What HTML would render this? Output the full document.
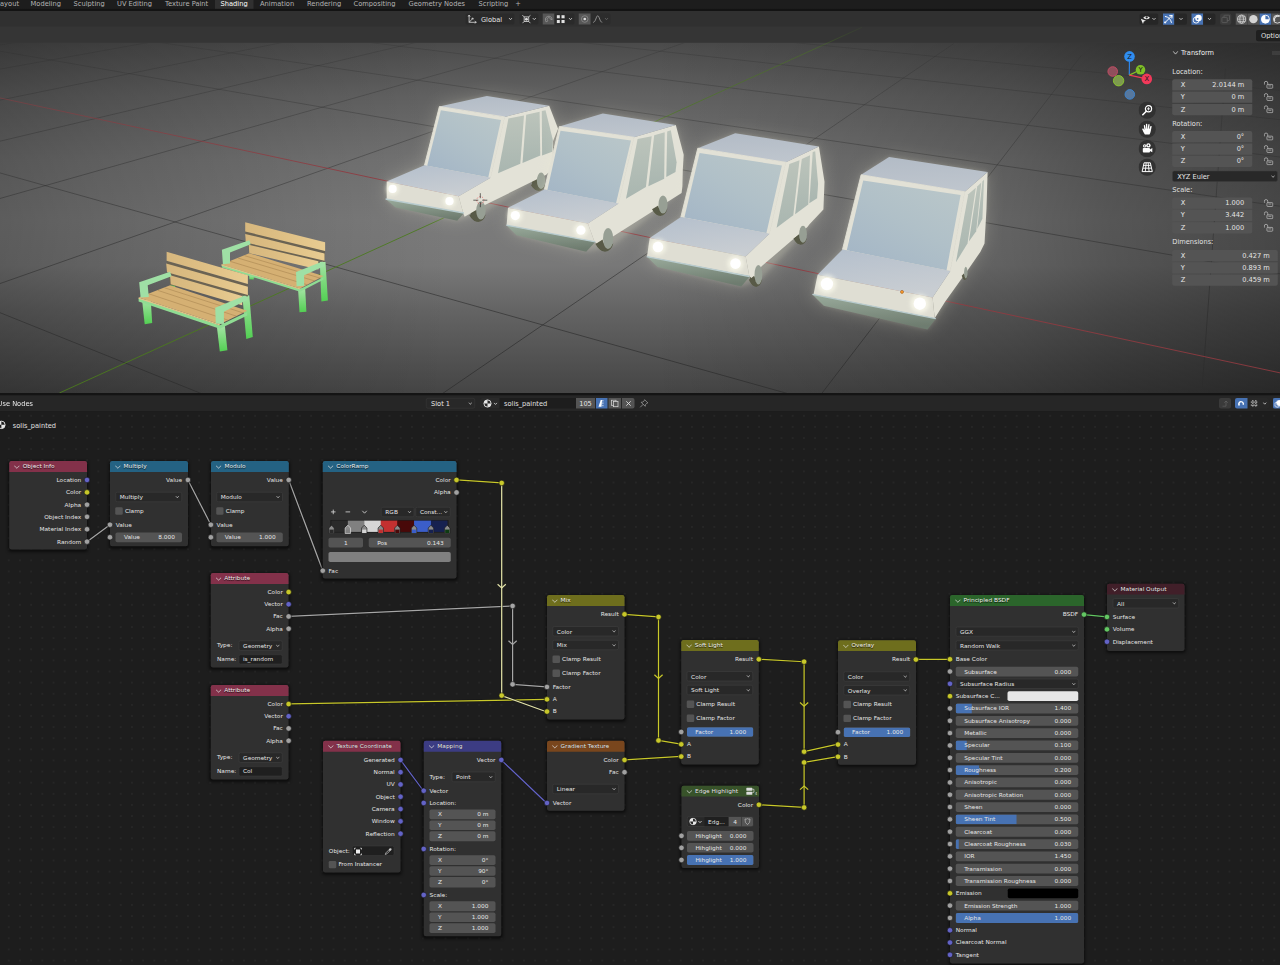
<!DOCTYPE html><html><head><meta charset="utf-8"><title>Blender</title><style>
#sc{position:absolute;left:0;top:0;width:5120px;height:3860px;transform:scale(.25);transform-origin:0 0}
#root{position:absolute;left:0;top:0;width:5120px;height:3860px}
html,body{width:1280px;height:965px;overflow:hidden;background:#1d1d1d;font-family:"DejaVu Sans","Liberation Sans",sans-serif;color:#e0e0e0}

*{box-sizing:border-box;margin:0;padding:0}
.abs{position:absolute}
#top{position:absolute;left:0;top:0;width:5120px;height:44px;z-index:5;background:linear-gradient(#1d1d1d 0,#1d1d1d 33.6px,#131313 36px,#131313 42.4px,#303030 44px);font-size:26.8px;line-height:32px;white-space:nowrap;overflow:hidden}
#top span{position:absolute;top:-1.2px;color:#b4b4b4}
#top .act{color:#fff}
#vp{position:absolute;left:0;top:40px;width:5120px;height:1532px;overflow:hidden;background:#353535}
#vphead{position:absolute;left:0;top:0;width:5120px;height:66px;background:#303030}
.ui{font-size:26.6px;line-height:40px;white-space:nowrap;color:#e4e4e4}
.fld{position:absolute;background:#545454;border-radius:8px;font-size:26.6px;line-height:41.6px;color:#e6e6e6;white-space:nowrap}
.fld i{font-style:normal;position:absolute;left:34px;top:0}
.fld b{font-weight:normal;position:absolute;right:32px;top:0}
.lbl{position:absolute;font-size:26.6px;line-height:36px;color:#e0e0e0;white-space:nowrap}
.dd{position:absolute;background:#282828;border:2px solid #3d3d3d;border-radius:8px;font-size:26.6px;line-height:40px;color:#e6e6e6;white-space:nowrap;padding-left:18px}
#sep{position:absolute;left:0;top:1572px;width:5120px;height:10.4px;background:#141414}
#nh{position:absolute;left:0;top:1582px;width:5120px;height:63.2px;background:#262626}
#ne{position:absolute;left:0;top:1645.2px;width:5120px;height:2214.8px;background-color:#1d1d1d;background-image:radial-gradient(circle,#262626 2.8px,transparent 3.6px);background-size:44.8px 44.48px;background-position:12.6px -4px;overflow:hidden}
.node{position:absolute;background:#303030;border-radius:8.8px;box-shadow:0 4px 12px 4px rgba(0,0,0,.55);font-size:23.4px;color:#e6e6e6;white-space:nowrap}
.nh{position:absolute;left:0;top:0;right:0;height:43.6px;border-radius:8.8px 8.8px 0 0;line-height:41.6px;padding-left:54px;text-shadow:0 2px 3.2px rgba(0,0,0,.8);color:#f0f0f0}
.nh:before{content:"";position:absolute;left:23.6px;top:12.4px;width:12.8px;height:12.8px;border-right:2.8px solid #dcdcdc;border-bottom:2.8px solid #dcdcdc;transform:rotate(45deg) scale(1,1);transform-origin:center}
.so{position:absolute;right:23.2px;line-height:32px;height:32px;margin-top:-17.2px;text-align:right}
.si{position:absolute;left:22.8px;line-height:32px;height:32px;margin-top:-17.2px}
.sk{position:absolute;width:21.6px;height:21.6px;border-radius:50%;border:2.4px solid #1a1a1a;margin:-10.8px 0 0 -10.8px}
.g{background:#a1a1a1}.y{background:#c7c729}.p{background:#6363c7}.gr{background:#63c763}
.nd{position:absolute;background:#282828;border:2px solid #424242;border-radius:7.2px;line-height:34.4px;padding-left:15.2px;color:#e6e6e6}
.nd:after,.dd:after{content:"";position:absolute;right:11.6px;top:50%;width:8.4px;height:8.4px;margin-top:-7.6px;border-right:2.8px solid #ddd;border-bottom:2.8px solid #ddd;transform:rotate(45deg)}
.nf{position:absolute;background:#545454;border-radius:7.2px;line-height:37.6px;color:#e6e6e6;overflow:hidden}
.nf i{font-style:normal;position:absolute;left:33.6px;top:0;z-index:1}
.nf b{font-weight:normal;position:absolute;right:28px;top:0;z-index:1}
.nf u{position:absolute;left:0;top:0;bottom:0;background:#4772b3}
.nf.c{text-align:center}
.cb{position:absolute;width:29.6px;height:29.6px;background:#545454;border-radius:5.2px}
.cl{position:absolute;line-height:32px;height:32px;margin-top:-17.2px}
.tf{position:absolute;background:#1f1f1f;border:2px solid #3d3d3d;border-radius:7.2px;line-height:35.2px;padding-left:14.4px}
</style></head><body><div id="sc"><div id="root">
<div id="top">
<div class="abs" style="left:860px;top:0;width:154px;height:35.2px;background:#303030;border-radius:0 0 0 0"></div>
<span style="left:0px">ayout</span>
<span style="left:122px">Modeling</span>
<span style="left:294px">Sculpting</span>
<span style="left:468px">UV Editing</span>
<span style="left:660px">Texture Paint</span>
<span style="left:882px" class=act>Shading</span>
<span style="left:1040px">Animation</span>
<span style="left:1228px">Rendering</span>
<span style="left:1414px">Compositing</span>
<span style="left:1634px">Geometry Nodes</span>
<span style="left:1914px">Scripting</span>
<span style="left:2060.8px">+</span>
</div>
<div id="vp">
<svg class="abs" style="left:0;top:0" width="5120" height="1532" viewBox="0 0 1280 383">
<defs>
<linearGradient id="flr" gradientUnits="userSpaceOnUse" x1="0" y1="33" x2="0" y2="383"><stop offset="0.000" stop-color="#4b4b4b"/><stop offset="0.149" stop-color="#616161"/><stop offset="0.334" stop-color="#737373"/><stop offset="0.506" stop-color="#7b7b7b"/><stop offset="0.634" stop-color="#787878"/><stop offset="0.763" stop-color="#646464"/><stop offset="0.863" stop-color="#575757"/><stop offset="1.000" stop-color="#454545"/></linearGradient>
<linearGradient id="gl" gradientUnits="userSpaceOnUse" x1="0" y1="33" x2="0" y2="383"><stop offset="0" stop-color="#2c2c2c" stop-opacity="0.3"/><stop offset="0.5" stop-color="#2c2c2c" stop-opacity="0.6"/><stop offset="1" stop-color="#2c2c2c" stop-opacity="0.85"/></linearGradient>
<linearGradient id="gax" gradientUnits="userSpaceOnUse" x1="59" y1="383" x2="862" y2="17"><stop offset="0" stop-color="#4a7a1c"/><stop offset="0.6" stop-color="#4a7a1c" stop-opacity="0.95"/><stop offset="0.94" stop-color="#4a7a1c" stop-opacity="0.5"/><stop offset="1" stop-color="#4a7a1c" stop-opacity="0.1"/></linearGradient>
<linearGradient id="rax" gradientUnits="userSpaceOnUse" x1="0" y1="0" x2="1280" y2="0"><stop offset="0" stop-color="#8f3a40" stop-opacity="0.55"/><stop offset="0.3" stop-color="#8f3a40"/><stop offset="1" stop-color="#8f3a40"/></linearGradient>
<linearGradient id="flh" gradientUnits="userSpaceOnUse" x1="0" y1="0" x2="1280" y2="0"><stop offset="0.000" stop-color="#000" stop-opacity="0.25"/><stop offset="0.078" stop-color="#000" stop-opacity="0.18"/><stop offset="0.234" stop-color="#000" stop-opacity="0.07"/><stop offset="0.352" stop-color="#000" stop-opacity="0"/><stop offset="0.508" stop-color="#000" stop-opacity="0"/><stop offset="0.664" stop-color="#000" stop-opacity="0.1"/><stop offset="0.789" stop-color="#000" stop-opacity="0.2"/><stop offset="0.867" stop-color="#000" stop-opacity="0.3"/><stop offset="1.000" stop-color="#000" stop-opacity="0.42"/></linearGradient>
<linearGradient id="ws" x1="0.9" y1="0" x2="0.2" y2="1"><stop offset="0" stop-color="#bac7c9"/><stop offset="0.5" stop-color="#b0c0c8"/><stop offset="1" stop-color="#a4b6c6"/></linearGradient>
<linearGradient id="hood" x1="0" y1="0" x2="0.4" y2="1"><stop offset="0" stop-color="#b4bfcc"/><stop offset="1" stop-color="#c8cdd2"/></linearGradient>
<linearGradient id="roof" x1="0" y1="0" x2="0.2" y2="1"><stop offset="0" stop-color="#b2bbc6"/><stop offset="1" stop-color="#bec5cd"/></linearGradient>
<linearGradient id="sw" x1="0" y1="0" x2="0" y2="1"><stop offset="0" stop-color="#bcc4bb"/><stop offset="1" stop-color="#a9b6b0"/></linearGradient>
<linearGradient id="bump" x1="0" y1="0" x2="0.15" y2="1"><stop offset="0" stop-color="#9aab9c"/><stop offset="1" stop-color="#6e7c6f"/></linearGradient>
<linearGradient id="legg" x1="0" y1="0" x2="0" y2="1"><stop offset="0" stop-color="#a5e3a5"/><stop offset="1" stop-color="#52cf52"/></linearGradient>
<linearGradient id="wood" x1="0" y1="0" x2="1" y2="0"><stop offset="0" stop-color="#d6b77e"/><stop offset="0.5" stop-color="#dfc085"/><stop offset="1" stop-color="#e8cc92"/></linearGradient>
<filter id="bl6" x="-40%" y="-40%" width="180%" height="180%"><feGaussianBlur stdDeviation="9"/></filter>
<filter id="bl2" x="-50%" y="-50%" width="200%" height="200%"><feGaussianBlur stdDeviation="2.2"/></filter>
<filter id="bl1" x="-50%" y="-50%" width="200%" height="200%"><feGaussianBlur stdDeviation="0.5"/></filter>
<filter id="blb" x="-30%" y="-30%" width="160%" height="160%"><feGaussianBlur stdDeviation="2"/></filter>
</defs>
<rect x="0" y="0" width="1280" height="383" fill="#353535"/>
<rect x="0" y="32.8" width="1280" height="351" fill="url(#flr)"/><rect x="0" y="32.8" width="1280" height="351" fill="url(#flh)"/>
<g clip-path="url(#fc)"><clipPath id="fc"><rect x="0" y="33" width="1280" height="350"/></clipPath>
<line x1="-1073.3" y1="61.4" x2="57.3" y2="-48.4" stroke="url(#gl)" stroke-width="0.85" opacity="1"/>
<line x1="-1068.2" y1="76.4" x2="98.2" y2="-44.7" stroke="url(#gl)" stroke-width="0.85" opacity="1"/>
<line x1="-1062.3" y1="93.7" x2="142.0" y2="-40.7" stroke="url(#gl)" stroke-width="0.85" opacity="1"/>
<line x1="-1055.5" y1="113.8" x2="188.9" y2="-36.4" stroke="url(#gl)" stroke-width="0.85" opacity="1"/>
<line x1="-1047.4" y1="137.3" x2="239.4" y2="-31.8" stroke="url(#gl)" stroke-width="0.85" opacity="1"/>
<line x1="-1037.9" y1="165.2" x2="293.9" y2="-26.8" stroke="url(#gl)" stroke-width="0.85" opacity="1"/>
<line x1="-1026.4" y1="199.0" x2="352.8" y2="-21.4" stroke="url(#gl)" stroke-width="0.85" opacity="1"/>
<line x1="-1012.3" y1="240.6" x2="416.7" y2="-15.6" stroke="url(#gl)" stroke-width="0.85" opacity="1"/>
<line x1="-994.4" y1="293.2" x2="486.3" y2="-9.2" stroke="url(#gl)" stroke-width="0.85" opacity="1"/>
<line x1="-971.0" y1="361.7" x2="562.4" y2="-2.3" stroke="url(#gl)" stroke-width="0.85" opacity="1"/>
<line x1="-939.4" y1="454.7" x2="646.0" y2="5.4" stroke="url(#gl)" stroke-width="0.85" opacity="1"/>
<line x1="-893.9" y1="588.2" x2="738.1" y2="13.8" stroke="url(#gl)" stroke-width="0.85" opacity="1"/>
<line x1="-697.8" y1="1164.1" x2="953.9" y2="33.5" stroke="url(#gl)" stroke-width="0.85" opacity="1"/>
<line x1="-415.2" y1="1994.2" x2="1081.5" y2="45.2" stroke="url(#gl)" stroke-width="0.85" opacity="1"/>
<line x1="1027.0" y1="2776.9" x2="1225.5" y2="58.4" stroke="url(#gl)" stroke-width="0.85" opacity="1"/>
<line x1="3073.5" y1="2772.8" x2="1389.5" y2="73.4" stroke="url(#gl)" stroke-width="0.85" opacity="1"/>
<line x1="5120.0" y1="2768.7" x2="1577.7" y2="90.6" stroke="url(#gl)" stroke-width="0.85" opacity="1"/>
<line x1="7166.4" y1="2764.5" x2="1796.2" y2="110.5" stroke="url(#gl)" stroke-width="0.85" opacity="1"/>
<line x1="-1081.8" y1="36.4" x2="-147.9" y2="2779.3" stroke="url(#gl)" stroke-width="0.85" opacity="1"/>
<line x1="-895.4" y1="20.3" x2="2992.5" y2="2773.0" stroke="url(#gl)" stroke-width="0.85" opacity="1"/>
<line x1="-736.7" y1="6.7" x2="6132.8" y2="2766.6" stroke="url(#gl)" stroke-width="0.85" opacity="1"/>
<line x1="-599.9" y1="-5.1" x2="9273.2" y2="2760.3" stroke="url(#gl)" stroke-width="0.85" opacity="1"/>
<line x1="-376.2" y1="-24.3" x2="4823.4" y2="880.4" stroke="url(#gl)" stroke-width="0.85" opacity="1"/>
<line x1="-283.6" y1="-32.3" x2="3678.6" y2="546.8" stroke="url(#gl)" stroke-width="0.85" opacity="1"/>
<line x1="-201.0" y1="-39.4" x2="3088.3" y2="374.7" stroke="url(#gl)" stroke-width="0.85" opacity="1"/>
<line x1="-126.9" y1="-45.8" x2="2728.3" y2="269.8" stroke="url(#gl)" stroke-width="0.85" opacity="1"/>
<line x1="-60.0" y1="-51.5" x2="2485.7" y2="199.1" stroke="url(#gl)" stroke-width="0.85" opacity="1"/>
<line x1="-480.8" y1="-15.3" x2="7997.1" y2="1805.4" stroke="url(#rax)" stroke-width="0.9" opacity="1"/>
</g>
<line x1="59.4" y1="383" x2="862" y2="17.3" stroke="url(#gax)" stroke-width="0.9"/>
<g filter="url(#bl1)">
<polygon points="138.6,287.5 166.6,241.8 247.9,265.2 252.3,328.1 221.9,341.3 143.7,313.9" fill="#e8e0a0" opacity="0" filter="url(#blb)"/>
<polygon points="221.3,254.6 245.2,212.3 325.1,232.3 327.9,290.5 300.1,302.3" fill="#e8e0a0" opacity="0" filter="url(#blb)"/>
<polygon points="298.0,278.4 305.2,278.4 306.4,301.7 299.5,302.3" fill="url(#legg)" />
<polygon points="319.8,252.0 325.5,252.0 327.9,290.5 321.4,291.6" fill="url(#legg)" />
<polygon points="249.3,265.2 253.8,265.6 253.8,269.6 249.3,269.2" fill="url(#legg)" />
<polygon points="221.9,254.6 300.1,279.0 300.1,281.8 221.9,257.4" fill="#8fdc93" />
<polygon points="300.1,279.0 323.4,267.2 323.4,269.8 300.1,281.8" fill="#8fdc93" />
<polygon points="221.3,254.6 249.3,243.2 323.4,266.0 300.1,278.4" fill="#d5b073" />
<polyline points="230.0,251.3 307.6,274.9" fill="none" stroke="#a98652" stroke-width="0.6"/>
<polyline points="238.1,248.1 314.9,271.0" fill="none" stroke="#a98652" stroke-width="0.6"/>
<polyline points="244.6,245.7 320.4,268.2" fill="none" stroke="#a98652" stroke-width="0.6"/>
<polygon points="221.3,254.6 300.1,278.4 300.1,279.4 221.3,255.6" fill="#e4c48a" />
<polygon points="245.2,220.5 325.1,240.8 324.5,252.0 249.3,243.2" fill="#6b6353" />
<polygon points="245.2,212.3 325.1,232.3 325.1,241.0 245.2,221.5" fill="url(#wood)" />
<polygon points="245.2,223.9 324.5,243.4 324.5,250.7 245.8,232.5" fill="url(#wood)" />
<polygon points="248.7,234.7 318.4,251.3 318.4,259.5 249.3,243.2" fill="url(#wood)" />
<polygon points="221.9,239.8 249.3,230.2 250.7,234.3 230.0,242.4 230.0,253.4 222.9,254.2" fill="#9fe0a5" />
<polygon points="296.0,262.1 322.4,251.5 324.5,256.0 304.1,265.2 304.1,275.7 296.6,276.3" fill="#9fe0a5" />
<polygon points="142.0,289.5 150.8,290.5 152.2,312.9 144.7,314.3" fill="url(#legg)" />
<polygon points="216.8,315.9 224.9,315.9 227.4,340.3 219.8,341.5" fill="url(#legg)" />
<polygon points="242.2,284.5 249.3,285.5 252.8,327.1 246.3,329.1" fill="url(#legg)" />
<polygon points="170.1,267.2 174.1,267.2 175.2,277.3 170.1,277.3" fill="url(#legg)" />
<polygon points="138.6,287.9 219.8,315.3 219.8,318.8 138.6,291.4" fill="#8fdc93" />
<polygon points="219.8,315.3 247.3,302.1 247.3,305.4 219.8,318.8" fill="#8fdc93" />
<polygon points="138.6,287.5 170.1,275.3 247.3,300.7 219.8,314.3" fill="#d5b073" />
<polyline points="148.8,283.8 228.4,310.3" fill="none" stroke="#a98652" stroke-width="0.6"/>
<polyline points="157.9,280.4 236.5,306.2" fill="none" stroke="#a98652" stroke-width="0.6"/>
<polyline points="164.6,277.8 243.2,302.9" fill="none" stroke="#a98652" stroke-width="0.6"/>
<polygon points="138.6,287.5 219.8,314.3 219.8,315.5 138.6,288.7" fill="#e4c48a" />
<polygon points="166.6,250.9 247.9,274.3 247.9,286.5 170.1,275.3" fill="#6b6353" />
<polygon points="166.6,241.8 247.9,265.2 247.9,274.1 166.6,250.7" fill="url(#wood)" />
<polygon points="166.2,253.4 247.9,276.7 247.9,285.1 167.0,262.3" fill="url(#wood)" />
<polygon points="170.1,265.2 242.2,285.9 242.2,295.2 170.7,274.3" fill="url(#wood)" />
<polygon points="139.2,272.3 170.1,261.7 171.5,266.2 147.7,275.3 148.8,287.1 140.6,287.5" fill="#9fe0a5" />
<polygon points="215.2,297.7 245.2,285.5 247.7,289.5 223.9,301.7 223.9,313.9 215.8,313.5" fill="#9fe0a5" />
</g>
<polygon points="439.4,96.5 486.9,86.1 549.2,95.8 558.1,118.8 552.9,158.1 483.9,202.7 457.2,210.8 395.6,197.5 385.6,189.0 386.7,171.5 424.5,155.2" fill="#f0eed4" opacity="0.22" filter="url(#bl6)"/>
<polygon points="439.4,96.5 486.9,86.1 549.2,95.8 558.1,118.8 552.9,158.1 483.9,202.7 457.2,210.8 395.6,197.5 385.6,189.0 386.7,171.5 424.5,155.2" fill="#f6f4dc" opacity="0.16" filter="url(#blb)"/>
<g filter="url(#bl1)">
<ellipse cx="537.1" cy="172.0" rx="5.2" ry="8.3" fill="#585a46"/>
<ellipse cx="476.4" cy="201.9" rx="5.9" ry="9.4" fill="#585a46"/>
<polygon points="385.6,189.0 463.9,203.0 457.2,210.8 395.6,197.5" fill="url(#bump)"/>
<polygon points="504.7,106.9 549.2,95.8 558.1,118.8 552.9,131.4 552.9,158.1 546.2,164.8 483.9,195.5 464.6,206.8 463.1,202.7 458.7,186.3 490.6,167.8" fill="#e3e2d7"/>
<polygon points="508.4,108.4 524.0,105.4 520.3,153.7 498.0,163.3" fill="url(#sw)"/>
<polygon points="526.2,104.7 539.6,101.7 540.3,145.5 522.5,152.9" fill="url(#sw)"/>
<polygon points="541.8,101.0 545.5,100.2 552.9,129.9 552.2,141.8 542.1,145.5" fill="url(#sw)"/>
<polygon points="439.4,96.5 486.9,86.1 549.2,95.8 504.7,106.9" fill="url(#roof)"/>
<polygon points="439.4,96.5 504.7,106.9 490.6,167.8 424.5,155.2" fill="#e2e1d6" stroke="#e2e1d6" stroke-width="0.9" stroke-linejoin="round"/>
<polygon points="440.9,100.2 501.0,109.9 488.3,167.3 427.2,155.7" fill="url(#ws)"/>
<polygon points="424.5,155.2 490.6,167.8 458.7,186.3 386.7,171.5" fill="url(#hood)"/>
<polygon points="386.7,171.5 458.7,186.3 463.1,202.7 386.7,189.3" fill="#dfded3"/>
<polyline points="385.6,189.0 463.9,203.0" fill="none" stroke="#b9cccf" stroke-width="1.3"/>
<path d="M540.2 178.9A4.6 8.6 0 0 1 536.7 171.6L530.9 175.0Q533.6 180.1 538.6 181.0Q543.8 180.5 545.2 174.4z" fill="#585a46"/>
<ellipse cx="541.1" cy="170.7" rx="4.2" ry="8.2" fill="#979f94"/>
<path d="M480.0 209.6A5.2 9.7 0 0 1 475.9 201.3L469.3 205.2Q472.4 211.0 478.1 212.0Q484.0 211.5 485.7 204.6z" fill="#585a46"/>
<ellipse cx="480.9" cy="200.4" rx="4.7" ry="9.2" fill="#979f94"/>
</g>
<circle cx="392.6" cy="178.9" r="6.1" fill="#fffef0" opacity="0.7" filter="url(#bl2)"/>
<circle cx="392.6" cy="178.9" r="4.1" fill="#ffffff" filter="url(#bl1)"/>
<circle cx="449.5" cy="191.2" r="6.1" fill="#fffef0" opacity="0.7" filter="url(#bl2)"/>
<circle cx="449.5" cy="191.2" r="4.1" fill="#ffffff" filter="url(#bl1)"/>
<polygon points="559.4,116.5 602.8,103.6 675.8,114.9 683.7,144.7 682.4,176.2 672.5,188.7 612.8,235.9 586.2,241.7 516.6,225.2 506.3,215.2 508.0,197.8 544.4,179.6" fill="#f0eed4" opacity="0.22" filter="url(#bl6)"/>
<polygon points="559.4,116.5 602.8,103.6 675.8,114.9 683.7,144.7 682.4,176.2 672.5,188.7 612.8,235.9 586.2,241.7 516.6,225.2 506.3,215.2 508.0,197.8 544.4,179.6" fill="#f6f4dc" opacity="0.16" filter="url(#blb)"/>
<g filter="url(#bl1)">
<ellipse cx="658.8" cy="195.9" rx="5.6" ry="9.3" fill="#585a46"/>
<ellipse cx="603.2" cy="230.2" rx="6.4" ry="10.8" fill="#585a46"/>
<polygon points="506.3,215.2 595.4,231.8 586.2,241.7 516.6,225.2" fill="url(#bump)"/>
<polygon points="634.0,127.3 675.8,114.9 683.7,144.7 682.8,159.7 682.4,176.2 681.6,182.9 672.5,188.7 599.5,235.1 594.5,231.8 587.9,213.5 618.6,193.6" fill="#e3e2d7"/>
<polygon points="637.6,129.0 651.7,126.2 645.9,177.1 626.0,188.7" fill="url(#sw)"/>
<polygon points="654.2,125.2 664.7,122.3 664.2,168.8 648.4,176.2" fill="url(#sw)"/>
<polygon points="667.2,121.5 670.8,120.2 676.6,152.2 675.5,162.1 666.3,167.1" fill="url(#sw)"/>
<polygon points="559.4,116.5 602.8,103.6 675.8,114.9 634.0,127.3" fill="url(#roof)"/>
<polygon points="559.4,116.5 634.0,127.3 618.6,193.6 544.4,179.6" fill="#e2e1d6" stroke="#e2e1d6" stroke-width="0.9" stroke-linejoin="round"/>
<polygon points="560.5,120.7 631.0,130.6 616.0,193.2 547.4,180.1" fill="url(#ws)"/>
<polygon points="544.4,179.6 618.6,193.6 587.9,213.5 508.0,197.8" fill="url(#hood)"/>
<polygon points="508.0,197.8 587.9,213.5 594.5,231.8 506.6,215.2" fill="#dfded3"/>
<polyline points="506.3,215.2 595.4,231.8" fill="none" stroke="#b9cccf" stroke-width="1.3"/>
<path d="M662.1 203.6A4.9 9.6 0 0 1 658.3 195.4L652.0 199.2Q655.0 205.0 660.3 206.0Q665.9 205.4 667.5 198.6z" fill="#585a46"/>
<ellipse cx="663.0" cy="194.5" rx="4.5" ry="9.1" fill="#979f94"/>
<path d="M607.1 239.1A5.7 11.1 0 0 1 602.7 229.5L595.5 234.0Q598.9 240.7 605.0 241.8Q611.5 241.2 613.3 233.3z" fill="#585a46"/>
<ellipse cx="608.1" cy="228.5" rx="5.1" ry="10.6" fill="#979f94"/>
</g>
<circle cx="515.3" cy="205.6" r="6.9" fill="#fffef0" opacity="0.7" filter="url(#bl2)"/>
<circle cx="515.3" cy="205.6" r="4.6" fill="#ffffff" filter="url(#bl1)"/>
<circle cx="580.9" cy="220.2" r="6.9" fill="#fffef0" opacity="0.7" filter="url(#bl2)"/>
<circle cx="580.9" cy="220.2" r="4.6" fill="#ffffff" filter="url(#bl1)"/>
<polygon points="697.8,138.2 735.2,123.2 818.9,136.4 824.5,171.7 823.4,199.5 807.4,219.3 761.6,268.6 741.3,276.5 657.6,257.1 646.7,246.6 649.7,228.1 680.9,206.9" fill="#f0eed4" opacity="0.22" filter="url(#bl6)"/>
<polygon points="697.8,138.2 735.2,123.2 818.9,136.4 824.5,171.7 823.4,199.5 807.4,219.3 761.6,268.6 741.3,276.5 657.6,257.1 646.7,246.6 649.7,228.1 680.9,206.9" fill="#f6f4dc" opacity="0.16" filter="url(#blb)"/>
<g filter="url(#bl1)">
<ellipse cx="799.3" cy="225.5" rx="4.8" ry="8.6" fill="#585a46"/>
<ellipse cx="754.7" cy="266.3" rx="4.8" ry="9.9" fill="#585a46"/>
<polygon points="646.7,246.6 749.6,266.5 741.3,276.5 657.6,257.1" fill="url(#bump)"/>
<polygon points="785.9,152.3 818.9,136.4 824.5,171.7 823.4,199.5 809.5,214.3 807.4,217.1 761.6,256.3 752.8,269.5 749.3,265.9 745.7,246.6 769.5,223.7" fill="#e3e2d7"/>
<polygon points="789.4,154.1 799.5,150.2 793.3,205.2 776.6,217.8" fill="url(#sw)"/>
<polygon points="801.8,149.1 810.0,145.2 808.3,194.6 795.1,204.3" fill="url(#sw)"/>
<polygon points="812.7,142.1 815.2,141.2 818.1,173.8 817.1,188.2 809.3,193.3" fill="url(#sw)"/>
<polygon points="697.8,138.2 735.2,123.2 818.9,136.4 785.9,152.3" fill="url(#roof)"/>
<polygon points="697.8,138.2 785.9,152.3 769.5,223.7 680.9,206.9" fill="#e2e1d6" stroke="#e2e1d6" stroke-width="0.9" stroke-linejoin="round"/>
<polygon points="699.6,143.1 781.9,155.5 766.4,223.1 684.4,207.6" fill="url(#ws)"/>
<polygon points="680.9,206.9 769.5,223.7 745.7,246.6 649.7,228.1" fill="url(#hood)"/>
<polygon points="649.7,228.1 745.7,246.6 749.3,265.9 647.0,246.6" fill="#dfded3"/>
<polyline points="646.7,246.6 749.6,266.5" fill="none" stroke="#b9cccf" stroke-width="1.3"/>
<path d="M802.2 232.6A4.3 8.9 0 0 1 798.9 225.0L793.5 228.6Q796.0 233.9 800.7 234.8Q805.5 234.3 806.9 228.0z" fill="#585a46"/>
<ellipse cx="803.0" cy="224.2" rx="3.9" ry="8.5" fill="#979f94"/>
<path d="M757.6 274.4A4.3 10.2 0 0 1 754.3 265.7L748.9 269.8Q751.4 275.9 756.1 276.9Q760.9 276.3 762.3 269.1z" fill="#585a46"/>
<ellipse cx="758.4" cy="264.7" rx="3.9" ry="9.7" fill="#979f94"/>
</g>
<circle cx="658.0" cy="236.9" r="7.9" fill="#fffef0" opacity="0.7" filter="url(#bl2)"/>
<circle cx="658.0" cy="236.9" r="5.3" fill="#ffffff" filter="url(#bl1)"/>
<circle cx="735.5" cy="253.6" r="7.9" fill="#fffef0" opacity="0.7" filter="url(#bl2)"/>
<circle cx="735.5" cy="253.6" r="5.3" fill="#ffffff" filter="url(#bl1)"/>
<polygon points="861.1,164.8 889.1,147.0 987.6,162.1 986.5,198.4 984.5,233.6 968.9,258.5 935.8,308.7 927.5,319.6 823.8,295.8 812.4,284.4 817.6,264.7 842.5,239.4" fill="#f0eed4" opacity="0.22" filter="url(#bl6)"/>
<polygon points="861.1,164.8 889.1,147.0 987.6,162.1 986.5,198.4 984.5,233.6 968.9,258.5 935.8,308.7 927.5,319.6 823.8,295.8 812.4,284.4 817.6,264.7 842.5,239.4" fill="#f6f4dc" opacity="0.16" filter="url(#blb)"/>
<g filter="url(#bl1)">
<ellipse cx="964.2" cy="263.6" rx="2.1" ry="5.9" fill="#585a46"/>
<polygon points="812.4,284.4 935.8,308.7 927.5,319.6 823.8,295.8" fill="url(#bump)"/>
<polygon points="964.8,181.8 987.6,162.1 986.5,198.4 984.5,233.6 980.3,241.9 968.9,258.5 945.1,291.7 934.7,308.2 932.6,287.5 950.3,261.0" fill="#e3e2d7"/>
<polygon points="968.3,184.3 975.8,177.7 967.5,233.6 955.9,252.3" fill="url(#sw)"/>
<polygon points="977.2,176.6 981.3,172.5 976.2,221.2 968.9,231.6" fill="url(#sw)"/>
<polygon points="982.4,171.5 984.0,169.8 982.4,208.8 977.2,219.1" fill="url(#sw)"/>
<polygon points="861.1,164.8 889.1,147.0 987.6,162.1 964.8,181.8" fill="url(#roof)"/>
<polygon points="861.1,164.8 964.8,181.8 950.3,261.0 842.5,239.4" fill="#e2e1d6" stroke="#e2e1d6" stroke-width="0.9" stroke-linejoin="round"/>
<polygon points="863.2,170.4 960.6,184.9 946.5,260.2 846.8,240.3" fill="url(#ws)"/>
<polygon points="842.5,239.4 950.3,261.0 932.6,287.5 817.6,264.7" fill="url(#hood)"/>
<polygon points="817.6,264.7 932.6,287.5 934.7,308.2 813.5,284.4" fill="#dfded3"/>
<polyline points="812.4,284.4 935.8,308.7" fill="none" stroke="#b9cccf" stroke-width="1.3"/>
<path d="M965.5 268.4A1.8 6.1 0 0 1 964.1 263.2L961.7 265.7Q962.8 269.3 964.8 270.0Q966.9 269.6 967.5 265.3z" fill="#585a46"/>
<ellipse cx="965.8" cy="262.6" rx="1.7" ry="5.8" fill="#979f94"/>
</g>
<circle cx="826.9" cy="274.0" r="9.3" fill="#fffef0" opacity="0.7" filter="url(#bl2)"/>
<circle cx="826.9" cy="274.0" r="6.2" fill="#ffffff" filter="url(#bl1)"/>
<circle cx="919.8" cy="293.7" r="9.3" fill="#fffef0" opacity="0.7" filter="url(#bl2)"/>
<circle cx="919.8" cy="293.7" r="6.2" fill="#ffffff" filter="url(#bl1)"/>
<g stroke-width="0.6" fill="none"><circle cx="480.3" cy="190.2" r="3.6" stroke="#e8e8e8" stroke-dasharray="1.4 1.4"/><circle cx="480.3" cy="190.2" r="3.6" stroke="#e04040" stroke-dasharray="1.4 1.4" stroke-dashoffset="1.4"/><path d="M480.3 183.2v5M480.3 192.2v5M473.3 190.2h5M482.3 190.2h5" stroke="#111"/></g>
<circle cx="902" cy="281.9" r="1.5" fill="#ffa030" stroke="#8a4200" stroke-width="0.5"/>
</svg>
<div id="vphead"></div>
<div class="abs" style="left:1861.6px;top:13.6px;width:196.8px;height:44.8px;background:#2a2a2a;border-radius:8px"><svg class="abs" style="left:8.8px;top:4px" width="37.6" height="37.6" viewBox="0 0 9.4 9.4"><path d="M1.6 0.6v7.2h7.2M1.6 0.6L0.5 2.2M1.6 0.6L2.7 2.2M8.8 7.8L7.2 6.7M8.8 7.8L7.2 8.9M1.6 7.8L5.6 3.6M5.6 3.6L4 3.9M5.6 3.6L5.4 5.2" fill="none" stroke="#dcdcdc" stroke-width="0.8"/></svg><span class="ui abs" style="left:62px;top:3.2px">Global</span><svg class="abs" style="right:8.8px;top:16.8px" width="16" height="12" viewBox="0 0 4 3"><path d="M0.4 0.5L2 2.2L3.6 0.5" fill="none" stroke="#ddd" stroke-width="0.8"/></svg></div>
<div class="abs" style="left:2077.6px;top:13.6px;width:76px;height:44.8px;background:#2a2a2a;border-radius:8px"><svg class="abs" style="left:9.6px;top:4px" width="37.6" height="37.6" viewBox="0 0 9.4 9.4"><rect x="2.4" y="2.4" width="4.6" height="4.6" fill="none" stroke="#dcdcdc" stroke-width="0.8"/><circle cx="4.7" cy="4.7" r="1.5" fill="#dcdcdc"/><path d="M0.6 0.6l1.8 1.8M8.8 0.6L7 2.4M0.6 8.8l1.8-1.8M8.8 8.8L7 7" stroke="#dcdcdc" stroke-width="0.8"/></svg><svg class="abs" style="right:8.8px;top:16.8px" width="16" height="12" viewBox="0 0 4 3"><path d="M0.4 0.5L2 2.2L3.6 0.5" fill="none" stroke="#ddd" stroke-width="0.8"/></svg></div>
<div class="abs" style="left:2171.2px;top:13.6px;width:46.4px;height:44.8px;background:#575757;border-radius:8px 0 0 8pxpx"><svg class="abs" style="left:5.6px;top:4.8px" width="36" height="36" viewBox="0 0 9 9"><path d="M2.2 7.6A3.4 3.4 0 1 1 7.9 5.2L6.2 4.7A1.7 1.7 0 1 0 3.5 6.2z" fill="none" stroke="#9c9c9c" stroke-width="0.8"/></svg></div>
<div class="abs" style="left:2218.4px;top:13.6px;width:80px;height:44.8px;background:#2a2a2a;border-radius:0 8px 8px 0px"><svg class="abs" style="left:8px;top:6.4px" width="33.6" height="33.6" viewBox="0 0 8.4 8.4"><g fill="#e2e2e2"><rect x="0.2" y="0.2" width="3.1" height="3.1"/><rect x="5" y="0.2" width="3.1" height="3.1"/><rect x="0.2" y="5" width="3.1" height="3.1"/><rect x="5" y="5" width="3.1" height="3.1"/></g></svg><svg class="abs" style="right:8.8px;top:16.8px" width="16" height="12" viewBox="0 0 4 3"><path d="M0.4 0.5L2 2.2L3.6 0.5" fill="none" stroke="#ddd" stroke-width="0.8"/></svg></div>
<div class="abs" style="left:2315.2px;top:13.6px;width:47.2px;height:44.8px;background:#575757;border-radius:8px 0 0 8pxpx"><svg class="abs" style="left:5.6px;top:4.4px" width="36" height="36" viewBox="0 0 9 9"><circle cx="4.5" cy="4.5" r="1.3" fill="#dcdcdc"/><circle cx="4.5" cy="4.5" r="3.3" fill="none" stroke="#8c8c8c" stroke-width="0.8"/></svg></div>
<div class="abs" style="left:2364px;top:13.6px;width:78.4px;height:44.8px;background:rgba(42,42,42,.55);border-radius:0 8px 8px 0px"><svg class="abs" style="left:7.2px;top:5.6px" width="40" height="36" viewBox="0 0 10 9"><path d="M0.4 7.6C3 7.6 3.4 1 5 1S7 7.6 9.6 7.6" fill="none" stroke="#979797" stroke-width="0.9"/></svg><svg class="abs" style="right:8.8px;top:16.8px" width="16" height="12" viewBox="0 0 4 3"><path d="M0.4 0.5L2 2.2L3.6 0.5" fill="none" stroke="#6a6a6a" stroke-width="0.8"/></svg></div>
<div class="abs" style="left:4557.6px;top:13.6px;width:75.2px;height:45.6px;background:#262626;border-radius:8px"><svg class="abs" style="left:2.4px;top:1.6px" width="44" height="44" viewBox="0 0 11 11"><path d="M3.2 3.9Q6.4 0.4 10 3.9Q6.6 6.9 3.2 3.9z" fill="#ececec"/><circle cx="6.7" cy="3.6" r="1.15" fill="#262626"/><path d="M0.8 4.9L6 6.9L3.8 7.7L3 10.2z" fill="#ececec"/></svg><svg class="abs" style="right:8.8px;top:16.8px" width="16" height="12" viewBox="0 0 4 3"><path d="M0.4 0.5L2 2.2L3.6 0.5" fill="none" stroke="#ddd" stroke-width="0.8"/></svg></div>
<div class="abs" style="left:4651.6px;top:13.6px;width:45.2px;height:45.6px;background:#4772b3;border-radius:8px 0 0 8pxpx"><svg class="abs" style="left:3.2px;top:3.6px" width="38.4" height="38.4" viewBox="0 0 9.6 9.6"><path d="M0.9 8.7L8.4 1.2M8.4 1.2L5.4 1.5M8.4 1.2L8.1 4.2M1.2 2.2Q6.4 2.8 7.8 8.6M0.9 8.7L2.4 8.4M0.9 8.7L1.2 7.2" fill="none" stroke="#fff" stroke-width="1"/></svg></div>
<div class="abs" style="left:4698.4px;top:13.6px;width:49.6px;height:45.6px;background:#262626;border-radius:0 8px 8px 0px"><svg class="abs" style="right:16px;top:16.8px" width="16" height="12" viewBox="0 0 4 3"><path d="M0.4 0.5L2 2.2L3.6 0.5" fill="none" stroke="#ddd" stroke-width="0.8"/></svg></div>
<div class="abs" style="left:4765.6px;top:13.6px;width:46.4px;height:45.6px;background:#4772b3;border-radius:8px 0 0 8pxpx"><svg class="abs" style="left:3.2px;top:2.8px" width="40" height="40" viewBox="0 0 10 10"><circle cx="6.2" cy="4" r="3.3" fill="#fff"/><circle cx="3.9" cy="6.1" r="3" fill="none" stroke="#fff" stroke-width="0.9"/><circle cx="5.4" cy="4.8" r="0.9" fill="#4772b3"/></svg></div>
<div class="abs" style="left:4813.6px;top:13.6px;width:48.8px;height:45.6px;background:#262626;border-radius:0 8px 8px 0px"><svg class="abs" style="right:16px;top:16.8px" width="16" height="12" viewBox="0 0 4 3"><path d="M0.4 0.5L2 2.2L3.6 0.5" fill="none" stroke="#ddd" stroke-width="0.8"/></svg></div>
<div class="abs" style="left:4880px;top:13.6px;width:44.8px;height:45.6px;background:#3c3c3c;border-radius:8px"><svg class="abs" style="left:4.8px;top:4.8px" width="36" height="36" viewBox="0 0 9 9"><rect x="2.8" y="0.6" width="5.4" height="5.4" rx="0.6" fill="none" stroke="#626262" stroke-width="0.8"/><rect x="0.6" y="2.8" width="5.4" height="5.4" rx="0.6" fill="#3c3c3c" stroke="#626262" stroke-width="0.8"/></svg></div>
<div class="abs" style="left:4942.8px;top:13.6px;width:47.2px;height:45.6px;background:#545454;border-radius:8px 0 0 8pxpx"><svg class="abs" style="left:4px;top:3.2px" width="39.2" height="39.2" viewBox="0 0 9.8 9.8"><circle cx="4.9" cy="4.9" r="4.1" fill="none" stroke="#dedede" stroke-width="0.8"/><ellipse cx="4.9" cy="4.9" rx="1.9" ry="4.1" fill="none" stroke="#dedede" stroke-width="0.7"/><path d="M0.8 4.9h8.2M1.5 2.7h6.8M1.5 7.1h6.8" stroke="#dedede" stroke-width="0.7"/></svg></div>
<div class="abs" style="left:4990.8px;top:13.6px;width:46.4px;height:45.6px;background:#545454;border-radius:0px"><svg class="abs" style="left:3.6px;top:3.2px" width="39.2" height="39.2" viewBox="0 0 9.8 9.8"><circle cx="4.9" cy="4.9" r="4.2" fill="#d4d4d4"/></svg></div>
<div class="abs" style="left:5038px;top:13.6px;width:47.2px;height:45.6px;background:#4772b3;border-radius:0px"><svg class="abs" style="left:4px;top:3.2px" width="39.2" height="39.2" viewBox="0 0 9.8 9.8"><circle cx="4.9" cy="4.9" r="4" fill="none" stroke="#fff" stroke-width="0.9"/><path d="M4.9 0.9A4 4 0 0 0 4.9 8.9A4 4 0 0 0 8.9 4.9L4.9 4.9z" fill="#fff"/></svg></div>
<div class="abs" style="left:5086px;top:13.6px;width:48px;height:45.6px;background:#545454;border-radius:0px"><svg class="abs" style="left:4px;top:3.2px" width="39.2" height="39.2" viewBox="0 0 9.8 9.8"><circle cx="4.9" cy="4.9" r="4" fill="none" stroke="#dedede" stroke-width="0.9"/><path d="M2.2 7A3.6 3.6 0 0 1 7 2.2" fill="none" stroke="#dedede" stroke-width="1.3"/></svg></div>
<div class="abs" style="left:5024px;top:80px;width:120px;height:44.8px;background:#1f1f1f;border-radius:8px"><span class="ui abs" style="left:20px;top:2px">Options</span></div>
<svg class="abs" style="left:4400px;top:120px" width="280" height="320" viewBox="1100 40 70 80">
<circle cx="1112.7" cy="71.5" r="4.8" fill="#9a5260" stroke="#d8506a" stroke-width="0.9" opacity="0.9"/>
<circle cx="1118.6" cy="80.7" r="5.2" fill="#7d9a4e" stroke="#8ccc2a" stroke-width="0.9"/>
<circle cx="1129.8" cy="94.4" r="4.8" fill="#5a7ea8" stroke="#3a8fe8" stroke-width="0.9" opacity="0.9"/>
<path d="M1129.3 75.1L1129.5 56.4" stroke="#2f83e3" stroke-width="1.2"/><path d="M1129.3 75.1L1140.5 69.8" stroke="#84c126" stroke-width="1.2"/><path d="M1129.3 75.1L1146.8 78.9" stroke="#f03a56" stroke-width="1.2"/>
<circle cx="1129.5" cy="56.4" r="5.3" fill="#2f8df0"/><circle cx="1140.5" cy="69.8" r="4.8" fill="#80bf26"/><circle cx="1146.8" cy="78.9" r="5.3" fill="#f2395a"/>
<g font-family="DejaVu Sans,sans-serif" font-size="6.8" fill="#1a1a1a" text-anchor="middle"><text x="1129.5" y="58.9">Z</text><text x="1140.5" y="72.3">Y</text><text x="1146.8" y="81.4">X</text></g>
</svg>
<svg class="abs" style="left:4554px;top:366.4px" width="69.6" height="69.6" viewBox="0 0 17.4 17.4"><circle cx="8.7" cy="8.7" r="8.6" fill="#2f2f2f" opacity="0.88"/><circle cx="10" cy="7.3" r="3.1" fill="none" stroke="#fff" stroke-width="1.2"/><path d="M7.8 9.7L4.3 13.2" stroke="#fff" stroke-width="1.6" stroke-linecap="round"/><path d="M8.4 7.3h3.2M10 5.7v3.2" stroke="#fff" stroke-width="0.8"/></svg>
<svg class="abs" style="left:4554px;top:442.4px" width="69.6" height="69.6" viewBox="0 0 17.4 17.4"><circle cx="8.7" cy="8.7" r="8.6" fill="#2f2f2f" opacity="0.88"/><path d="M6.4 14Q4.6 11.4 3.6 8.6Q3.9 7.5 4.9 8.1L5.9 9.8L5.3 4.9Q5.8 4 6.5 4.8L7.3 8.3H7.6L7.4 3.6Q8 2.8 8.7 3.6L8.9 8.2H9.2L9.8 3.9Q10.5 3.2 11.1 4L10.6 8.5H10.9L12 5.6Q12.7 5.1 13.2 5.8L12.3 10.6Q12 12.6 11 14z" fill="#fff"/></svg>
<svg class="abs" style="left:4554px;top:519.6px" width="69.6" height="69.6" viewBox="0 0 17.4 17.4"><circle cx="8.7" cy="8.7" r="8.6" fill="#2f2f2f" opacity="0.88"/><rect x="4.3" y="7.9" width="7.2" height="4.6" rx="0.9" fill="#fff"/><path d="M11.5 9.4l2.3-1.3v4.2l-2.3-1.3z" fill="#fff"/><circle cx="6.2" cy="5.9" r="1.7" fill="#fff"/><circle cx="9.9" cy="5.4" r="2.2" fill="#fff"/><circle cx="9.9" cy="5.4" r="0.8" fill="#2b2b2b"/><circle cx="6.2" cy="5.9" r="0.6" fill="#2b2b2b"/></svg>
<svg class="abs" style="left:4554px;top:594.4px" width="69.6" height="69.6" viewBox="0 0 17.4 17.4"><circle cx="8.7" cy="8.7" r="8.6" fill="#2f2f2f" opacity="0.88"/><path d="M5.6 4.3h6.2l2 8.8H3.6z" fill="none" stroke="#fff" stroke-width="1"/><path d="M7.7 4.3l-.9 8.8M9.7 4.3l.9 8.8M5 6.9h7.4M4.4 9.7h8.6" stroke="#fff" stroke-width="0.9"/></svg>
<div class="lbl" style="left:4724px;top:152px;color:#f0f0f0">Transform</div>
<svg class="abs" style="left:4690.4px;top:162.4px" width="24" height="20" viewBox="0 0 6 5"><path d="M0.6 0.8L3 3.6L5.4 0.8" fill="none" stroke="#ddd" stroke-width="0.8"/></svg>
<div class="abs" style="left:5088px;top:164px;width:32px;height:16px;background-image:radial-gradient(circle,#5a5a5a 2px,transparent 2.4px);background-size:6.4px 6.4px"></div>
<div class="lbl" style="left:4689.2px;top:228px">Location:</div>
<div class="fld" style="left:4688.8px;top:276.8px;width:320px;height:45px;line-height:41.4px;border-radius:8px 8px 0 0"><i>X</i><b>2.0144 m</b></div>
<svg class="abs" style="left:5055.2px;top:279.6px" width="40" height="36" viewBox="0 0 10 9"><path d="M0.6 4.6V3A1.7 1.7 0 0 1 4 3V4.6" fill="none" stroke="#c4c4c4" stroke-width="0.7"/><rect x="3.2" y="4.4" width="5.8" height="3.8" rx="0.7" fill="none" stroke="#c4c4c4" stroke-width="0.7"/><path d="M4.6 5.9h3" stroke="#c4c4c4" stroke-width="0.6"/></svg>
<div class="fld" style="left:4688.8px;top:326.2px;width:320px;height:45px;line-height:41.4px;border-radius:0"><i>Y</i><b>0 m</b></div>
<svg class="abs" style="left:5055.2px;top:329.2px" width="40" height="36" viewBox="0 0 10 9"><path d="M0.6 4.6V3A1.7 1.7 0 0 1 4 3V4.6" fill="none" stroke="#c4c4c4" stroke-width="0.7"/><rect x="3.2" y="4.4" width="5.8" height="3.8" rx="0.7" fill="none" stroke="#c4c4c4" stroke-width="0.7"/><path d="M4.6 5.9h3" stroke="#c4c4c4" stroke-width="0.6"/></svg>
<div class="fld" style="left:4688.8px;top:375.6px;width:320px;height:45px;line-height:41.4px;border-radius:0 0 8px 8px"><i>Z</i><b>0 m</b></div>
<svg class="abs" style="left:5055.2px;top:378.4px" width="40" height="36" viewBox="0 0 10 9"><path d="M0.6 4.6V3A1.7 1.7 0 0 1 4 3V4.6" fill="none" stroke="#c4c4c4" stroke-width="0.7"/><rect x="3.2" y="4.4" width="5.8" height="3.8" rx="0.7" fill="none" stroke="#c4c4c4" stroke-width="0.7"/><path d="M4.6 5.9h3" stroke="#c4c4c4" stroke-width="0.6"/></svg>
<div class="lbl" style="left:4689.2px;top:436px">Rotation:</div>
<div class="fld" style="left:4688.8px;top:484.4px;width:320px;height:45px;line-height:41.4px;border-radius:8px 8px 0 0"><i>X</i><b>0°</b></div>
<svg class="abs" style="left:5055.2px;top:487.2px" width="40" height="36" viewBox="0 0 10 9"><path d="M0.6 4.6V3A1.7 1.7 0 0 1 4 3V4.6" fill="none" stroke="#c4c4c4" stroke-width="0.7"/><rect x="3.2" y="4.4" width="5.8" height="3.8" rx="0.7" fill="none" stroke="#c4c4c4" stroke-width="0.7"/><path d="M4.6 5.9h3" stroke="#c4c4c4" stroke-width="0.6"/></svg>
<div class="fld" style="left:4688.8px;top:533.8px;width:320px;height:45px;line-height:41.4px;border-radius:0"><i>Y</i><b>0°</b></div>
<svg class="abs" style="left:5055.2px;top:536.8px" width="40" height="36" viewBox="0 0 10 9"><path d="M0.6 4.6V3A1.7 1.7 0 0 1 4 3V4.6" fill="none" stroke="#c4c4c4" stroke-width="0.7"/><rect x="3.2" y="4.4" width="5.8" height="3.8" rx="0.7" fill="none" stroke="#c4c4c4" stroke-width="0.7"/><path d="M4.6 5.9h3" stroke="#c4c4c4" stroke-width="0.6"/></svg>
<div class="fld" style="left:4688.8px;top:583.2px;width:320px;height:45px;line-height:41.4px;border-radius:0 0 8px 8px"><i>Z</i><b>0°</b></div>
<svg class="abs" style="left:5055.2px;top:586px" width="40" height="36" viewBox="0 0 10 9"><path d="M0.6 4.6V3A1.7 1.7 0 0 1 4 3V4.6" fill="none" stroke="#c4c4c4" stroke-width="0.7"/><rect x="3.2" y="4.4" width="5.8" height="3.8" rx="0.7" fill="none" stroke="#c4c4c4" stroke-width="0.7"/><path d="M4.6 5.9h3" stroke="#c4c4c4" stroke-width="0.6"/></svg>
<div class="dd" style="left:4688.8px;top:643.2px;width:422.4px;height:44px;line-height:43.6px">XYZ Euler</div>
<div class="lbl" style="left:4689.2px;top:700.8px">Scale:</div>
<div class="fld" style="left:4688.8px;top:750px;width:320px;height:45px;line-height:41.4px;border-radius:8px 8px 0 0"><i>X</i><b>1.000</b></div>
<svg class="abs" style="left:5055.2px;top:752.8px" width="40" height="36" viewBox="0 0 10 9"><path d="M0.6 4.6V3A1.7 1.7 0 0 1 4 3V4.6" fill="none" stroke="#c4c4c4" stroke-width="0.7"/><rect x="3.2" y="4.4" width="5.8" height="3.8" rx="0.7" fill="none" stroke="#c4c4c4" stroke-width="0.7"/><path d="M4.6 5.9h3" stroke="#c4c4c4" stroke-width="0.6"/></svg>
<div class="fld" style="left:4688.8px;top:799.4px;width:320px;height:45px;line-height:41.4px;border-radius:0"><i>Y</i><b>3.442</b></div>
<svg class="abs" style="left:5055.2px;top:802.4px" width="40" height="36" viewBox="0 0 10 9"><path d="M0.6 4.6V3A1.7 1.7 0 0 1 4 3V4.6" fill="none" stroke="#c4c4c4" stroke-width="0.7"/><rect x="3.2" y="4.4" width="5.8" height="3.8" rx="0.7" fill="none" stroke="#c4c4c4" stroke-width="0.7"/><path d="M4.6 5.9h3" stroke="#c4c4c4" stroke-width="0.6"/></svg>
<div class="fld" style="left:4688.8px;top:848.8px;width:320px;height:45px;line-height:41.4px;border-radius:0 0 8px 8px"><i>Z</i><b>1.000</b></div>
<svg class="abs" style="left:5055.2px;top:851.6px" width="40" height="36" viewBox="0 0 10 9"><path d="M0.6 4.6V3A1.7 1.7 0 0 1 4 3V4.6" fill="none" stroke="#c4c4c4" stroke-width="0.7"/><rect x="3.2" y="4.4" width="5.8" height="3.8" rx="0.7" fill="none" stroke="#c4c4c4" stroke-width="0.7"/><path d="M4.6 5.9h3" stroke="#c4c4c4" stroke-width="0.6"/></svg>
<div class="lbl" style="left:4689.2px;top:908px">Dimensions:</div>
<div class="fld" style="left:4688.8px;top:959.6px;width:422.4px;height:45px;line-height:41.4px;border-radius:8px 8px 0 0"><i>X</i><b>0.427 m</b></div>
<div class="fld" style="left:4688.8px;top:1009px;width:422.4px;height:45px;line-height:41.4px;border-radius:0"><i>Y</i><b>0.893 m</b></div>
<div class="fld" style="left:4688.8px;top:1058.4px;width:422.4px;height:45px;line-height:41.4px;border-radius:0 0 8px 8px"><i>Z</i><b>0.459 m</b></div>
</div>
<div id="sep"></div>
<div id="nh">
<div class="lbl" style="left:-9.6px;top:14.8px;color:#e8e8e8">Use Nodes</div>
<div class="dd" style="left:1704px;top:10px;width:196px;height:42.4px;line-height:39.2px;padding-left:18px">Slot 1</div>
<div class="abs" style="left:1920px;top:10px;width:460px;height:42.4px;background:#1d1d1d;border-radius:8px"></div><div class="abs" style="left:1920px;top:10px;width:78.4px;height:42.4px;background:#2a2a2a;border-radius:8px 0 0 8px"></div>
<svg class="abs" style="left:1932px;top:14px" width="36" height="36" viewBox="0 0 9 9"><circle cx="4.5" cy="4.5" r="3.6" fill="none" stroke="#e8e8e8" stroke-width="0.9"/><path d="M4.5 0.9A3.6 3.6 0 0 0 0.9 4.5H4.5zM4.5 4.5H8.1A3.6 3.6 0 0 1 4.5 8.1z" fill="#e8e8e8"/></svg>
<svg class="abs" style="left:1974px;top:26.8px" width="16" height="12" viewBox="0 0 4 3"><path d="M0.4 0.5L2 2.2L3.6 0.5" fill="none" stroke="#ddd" stroke-width="0.8"/></svg>
<div class="lbl" style="left:2016px;top:14.8px">solis_painted</div>
<div class="abs ui" style="left:2304px;top:10px;width:76px;height:42.4px;background:#545454;text-align:center;line-height:41.6px">105</div>
<div class="abs" style="left:2384px;top:10px;width:46px;height:42.4px;background:#4772b3"><svg class="abs" style="left:6.4px;top:4.8px" width="32" height="32" viewBox="0 0 8 8"><path d="M1 7.5L3.2 0.8H4.6L4 7.5z" fill="#fff"/><path d="M5.4 0.8v6.7" stroke="#fff" stroke-width="0.8" stroke-dasharray="1.4 1"/></svg></div>
<div class="abs" style="left:2434px;top:10px;width:50px;height:42.4px;background:#545454"><svg class="abs" style="left:9.6px;top:6.4px" width="32" height="32" viewBox="0 0 8 8"><rect x="0.6" y="0.6" width="4.4" height="5.2" fill="none" stroke="#ddd" stroke-width="0.7"/><rect x="2.6" y="2" width="4.4" height="5.2" fill="#545454" stroke="#ddd" stroke-width="0.7"/></svg></div>
<div class="abs" style="left:2488px;top:10px;width:50px;height:42.4px;background:#545454;border-radius:0 8px 8px 0"><svg class="abs" style="left:13.6px;top:10.4px" width="24" height="24" viewBox="0 0 6 6"><path d="M0.8 0.8L5.2 5.2M5.2 0.8L0.8 5.2" stroke="#ddd" stroke-width="0.9"/></svg></div>
<svg class="abs" style="left:2556px;top:12px" width="40" height="40" viewBox="0 0 10 10"><path d="M5.6 1.2L8.8 4.4L7.8 4.8L6.4 6.2L6.2 7.8L2.2 3.8L3.8 3.6L5.2 2.2z" fill="none" stroke="#aaa" stroke-width="0.7"/><path d="M4.2 5.8L1.2 8.8" stroke="#aaa" stroke-width="0.7"/></svg>
<div class="abs" style="left:4876px;top:10px;width:48px;height:42.4px;background:#3a3a3a;border-radius:8px"><svg class="abs" style="left:10px;top:7.2px" width="28" height="28" viewBox="0 0 7 7"><path d="M1 6.5H4.5V1.2M4.5 1.2L2.8 3M4.5 1.2L6.2 3" fill="none" stroke="#666" stroke-width="0.7"/></svg></div>
<div class="abs" style="left:4940px;top:10px;width:50px;height:42.4px;background:#4772b3;border-radius:8px 0 0 8px"><svg class="abs" style="left:8.8px;top:5.6px" width="32" height="32" viewBox="0 0 8 8"><path d="M1.5 6.4A3 3 0 1 1 6.6 5.6L5.2 5A1.5 1.5 0 1 0 2.8 5.4z" fill="#fff"/></svg></div>
<div class="abs" style="left:4993.2px;top:10px;width:82.8px;height:42.4px;background:#282828;border-radius:0 8px 8px 0"><svg class="abs" style="left:8px;top:5.6px" width="32" height="32" viewBox="0 0 8 8"><path d="M2.6 0.5v7M5.6 0.5v7M0.5 2.6h7M0.5 5.6h7" stroke="#ddd" stroke-width="0.9" stroke-dasharray="1.6 0.9"/></svg><svg class="abs" style="right:8.8px;top:16px" width="16" height="12" viewBox="0 0 4 3"><path d="M0.4 0.5L2 2.2L3.6 0.5" fill="none" stroke="#ddd" stroke-width="0.8"/></svg></div>
<div class="abs" style="left:5090px;top:10px;width:48px;height:42.4px;background:#4772b3;border-radius:8px 0 0 8px"><svg class="abs" style="left:6.4px;top:4.8px" width="36" height="36" viewBox="0 0 9 9"><circle cx="5.4" cy="3.8" r="3" fill="#fff"/><circle cx="3.4" cy="5.4" r="2.6" fill="none" stroke="#fff" stroke-width="0.8"/></svg></div>
</div>
<div id="ne">
<svg class="abs" style="left:-12.8px;top:35.6px" width="36.8" height="36.8" viewBox="0 0 9 9"><circle cx="4.5" cy="4.5" r="3.7" fill="none" stroke="#e8e8e8" stroke-width="0.9"/><path d="M4.5 0.8A3.7 3.7 0 0 0 0.8 4.5H4.5zM4.5 4.5H8.2A3.7 3.7 0 0 1 4.5 8.2z" fill="#e8e8e8"/></svg>
<div class="lbl" style="left:51.2px;top:38.4px">solis_painted</div>
<svg class="abs" style="left:0;top:0" width="5120" height="2216" viewBox="0 411.3 1280 554">
<path d="M87.0 541.7 L110.0 524.8" fill="none" stroke="#111" stroke-width="2.2" stroke-linejoin="round" opacity="0.75"/><path d="M87.0 541.7 L110.0 524.8" fill="none" stroke="#a6a6a6" stroke-width="1.25" stroke-linejoin="round"/>
<path d="M187.9 480.0 L210.9 524.8" fill="none" stroke="#111" stroke-width="2.2" stroke-linejoin="round" opacity="0.75"/><path d="M187.9 480.0 L210.9 524.8" fill="none" stroke="#a6a6a6" stroke-width="1.25" stroke-linejoin="round"/>
<path d="M288.7 480.0 L322.8 570.8" fill="none" stroke="#111" stroke-width="2.2" stroke-linejoin="round" opacity="0.75"/><path d="M288.7 480.0 L322.8 570.8" fill="none" stroke="#a6a6a6" stroke-width="1.25" stroke-linejoin="round"/>
<path d="M288.5 616.5 L512.6 606.0" fill="none" stroke="#111" stroke-width="2.2" stroke-linejoin="round" opacity="0.75"/><path d="M288.5 616.5 L512.6 606.0" fill="none" stroke="#a6a6a6" stroke-width="1.25" stroke-linejoin="round"/>
<path d="M512.6 606.0 L512.6 684.4" fill="none" stroke="#111" stroke-width="2.2" stroke-linejoin="round" opacity="0.75"/><path d="M512.6 606.0 L512.6 684.4" fill="none" stroke="#a6a6a6" stroke-width="1.25" stroke-linejoin="round"/>
<path d="M508.5 640.8L512.6 644.5L516.7 640.8" fill="none" stroke="#a6a6a6" stroke-width="1.2"/>
<path d="M512.6 684.4 L546.3 687.0" fill="none" stroke="#111" stroke-width="2.2" stroke-linejoin="round" opacity="0.75"/><path d="M512.6 684.4 L546.3 687.0" fill="none" stroke="#a6a6a6" stroke-width="1.25" stroke-linejoin="round"/>
<path d="M456.9 480.0 L501.7 483.0" fill="none" stroke="#111" stroke-width="2.2" stroke-linejoin="round" opacity="0.75"/><path d="M456.9 480.0 L501.7 483.0" fill="none" stroke="#c9c92a" stroke-width="1.25" stroke-linejoin="round"/>
<path d="M289.2 704.0 L546.3 699.5" fill="none" stroke="#111" stroke-width="2.2" stroke-linejoin="round" opacity="0.75"/><path d="M289.2 704.0 L546.3 699.5" fill="none" stroke="#c9c92a" stroke-width="1.25" stroke-linejoin="round"/>
<path d="M501.7 483.0 L501.7 695.6" fill="none" stroke="#111" stroke-width="2.2" stroke-linejoin="round" opacity="0.75"/><path d="M501.7 483.0 L501.7 695.6" fill="none" stroke="#e2e2a8" stroke-width="1.25" stroke-linejoin="round"/>
<path d="M497.6 584.3L501.7 588.0L505.8 584.3" fill="none" stroke="#e2e2a8" stroke-width="1.2"/>
<path d="M501.7 695.6 L546.3 711.8" fill="none" stroke="#111" stroke-width="2.2" stroke-linejoin="round" opacity="0.75"/><path d="M501.7 695.6 L546.3 711.8" fill="none" stroke="#e2e2a8" stroke-width="1.25" stroke-linejoin="round"/>
<path d="M624.5 614.5 L658.5 617.0" fill="none" stroke="#111" stroke-width="2.2" stroke-linejoin="round" opacity="0.75"/><path d="M624.5 614.5 L658.5 617.0" fill="none" stroke="#c9c92a" stroke-width="1.25" stroke-linejoin="round"/>
<path d="M658.5 617.0 L658.5 740.5" fill="none" stroke="#111" stroke-width="2.2" stroke-linejoin="round" opacity="0.75"/><path d="M658.5 617.0 L658.5 740.5" fill="none" stroke="#c9c92a" stroke-width="1.25" stroke-linejoin="round"/>
<path d="M654.4 674.8L658.5 678.5L662.6 674.8" fill="none" stroke="#c9c92a" stroke-width="1.2"/>
<path d="M658.5 740.5 L681.0 744.2" fill="none" stroke="#111" stroke-width="2.2" stroke-linejoin="round" opacity="0.75"/><path d="M658.5 740.5 L681.0 744.2" fill="none" stroke="#c9c92a" stroke-width="1.25" stroke-linejoin="round"/>
<path d="M624.5 760.0 L681.0 756.5" fill="none" stroke="#111" stroke-width="2.2" stroke-linejoin="round" opacity="0.75"/><path d="M624.5 760.0 L681.0 756.5" fill="none" stroke="#c9c92a" stroke-width="1.25" stroke-linejoin="round"/>
<path d="M759.0 659.3 L804.1 661.8" fill="none" stroke="#111" stroke-width="2.2" stroke-linejoin="round" opacity="0.75"/><path d="M759.0 659.3 L804.1 661.8" fill="none" stroke="#c9c92a" stroke-width="1.25" stroke-linejoin="round"/>
<path d="M804.1 661.8 L804.1 751.7" fill="none" stroke="#111" stroke-width="2.2" stroke-linejoin="round" opacity="0.75"/><path d="M804.1 661.8 L804.1 751.7" fill="none" stroke="#c9c92a" stroke-width="1.25" stroke-linejoin="round"/>
<path d="M800.0 702.6L804.1 706.3L808.2 702.6" fill="none" stroke="#c9c92a" stroke-width="1.2"/>
<path d="M804.1 751.7 L837.8 744.2" fill="none" stroke="#111" stroke-width="2.2" stroke-linejoin="round" opacity="0.75"/><path d="M804.1 751.7 L837.8 744.2" fill="none" stroke="#c9c92a" stroke-width="1.25" stroke-linejoin="round"/>
<path d="M759.0 804.8 L804.1 807.5" fill="none" stroke="#111" stroke-width="2.2" stroke-linejoin="round" opacity="0.75"/><path d="M759.0 804.8 L804.1 807.5" fill="none" stroke="#c9c92a" stroke-width="1.25" stroke-linejoin="round"/>
<path d="M804.1 807.5 L804.1 762.5" fill="none" stroke="#111" stroke-width="2.2" stroke-linejoin="round" opacity="0.75"/><path d="M804.1 807.5 L804.1 762.5" fill="none" stroke="#c9c92a" stroke-width="1.25" stroke-linejoin="round"/>
<path d="M800.0 789.7L804.1 786.0L808.2 789.7" fill="none" stroke="#c9c92a" stroke-width="1.2"/>
<path d="M804.1 762.5 L837.8 756.6" fill="none" stroke="#111" stroke-width="2.2" stroke-linejoin="round" opacity="0.75"/><path d="M804.1 762.5 L837.8 756.6" fill="none" stroke="#c9c92a" stroke-width="1.25" stroke-linejoin="round"/>
<path d="M915.9 659.3 L949.6 659.3" fill="none" stroke="#111" stroke-width="2.2" stroke-linejoin="round" opacity="0.75"/><path d="M915.9 659.3 L949.6 659.3" fill="none" stroke="#c9c92a" stroke-width="1.25" stroke-linejoin="round"/>
<path d="M400.5 760.0 L423.4 790.8" fill="none" stroke="#111" stroke-width="2.2" stroke-linejoin="round" opacity="0.75"/><path d="M400.5 760.0 L423.4 790.8" fill="none" stroke="#6464c8" stroke-width="1.25" stroke-linejoin="round"/>
<path d="M501.2 760.0 L546.5 803.0" fill="none" stroke="#111" stroke-width="2.2" stroke-linejoin="round" opacity="0.75"/><path d="M501.2 760.0 L546.5 803.0" fill="none" stroke="#6464c8" stroke-width="1.25" stroke-linejoin="round"/>
<path d="M1084.0 614.6 L1106.8 617.0" fill="none" stroke="#111" stroke-width="2.2" stroke-linejoin="round" opacity="0.75"/><path d="M1084.0 614.6 L1106.8 617.0" fill="none" stroke="#63c763" stroke-width="1.25" stroke-linejoin="round"/>
<circle cx="512.6" cy="606" r="2.75" fill="#a6a6a6" stroke="#161616" stroke-width="0.6"/>
<circle cx="512.6" cy="684.4" r="2.75" fill="#a6a6a6" stroke="#161616" stroke-width="0.6"/>
<circle cx="501.7" cy="483" r="2.75" fill="#c9c92a" stroke="#161616" stroke-width="0.6"/>
<circle cx="501.7" cy="695.6" r="2.75" fill="#c9c92a" stroke="#161616" stroke-width="0.6"/>
<circle cx="658.5" cy="617" r="2.75" fill="#c9c92a" stroke="#161616" stroke-width="0.6"/>
<circle cx="658.5" cy="740.5" r="2.75" fill="#c9c92a" stroke="#161616" stroke-width="0.6"/>
<circle cx="804.1" cy="661.75" r="2.75" fill="#c9c92a" stroke="#161616" stroke-width="0.6"/>
<circle cx="804.1" cy="751.7" r="2.75" fill="#c9c92a" stroke="#161616" stroke-width="0.6"/>
<circle cx="804.1" cy="807.5" r="2.75" fill="#c9c92a" stroke="#161616" stroke-width="0.6"/>
<circle cx="804.1" cy="762.5" r="2.75" fill="#c9c92a" stroke="#161616" stroke-width="0.6"/>
</svg>
<div class="node" style="left:36.8px;top:198.8px;width:311.2px;height:353.6px"><div class="nh" style="background:#83314a">Object Info</div>
<div class="so" style="top:76px">Location</div>
<div class="so" style="top:125.6px">Color</div>
<div class="so" style="top:175px">Alpha</div>
<div class="so" style="top:223.6px">Object Index</div>
<div class="so" style="top:273.2px">Material Index</div>
<div class="so" style="top:322.8px">Random</div>
</div>
<div class="node" style="left:440px;top:198.8px;width:311.6px;height:340.8px"><div class="nh" style="background:#246283">Multiply</div>
<div class="so" style="top:76px">Value</div>
<div class="nd" style="left:22px;top:124.4px;width:265.6px;height:39.2px;line-height:38.8px">Multiply</div>
<div class="cb" style="left:21.2px;top:185.2px"></div><div class="cl" style="left:59.6px;top:200px">Clamp</div>
<div class="si" style="top:255.2px">Value</div>
<div class="nf " style="left:22px;top:286.4px;width:265.6px;height:38.4px;line-height:38.4px"><i>Value</i><b>8.000</b></div>
</div>
<div class="node" style="left:843.6px;top:198.8px;width:311.2px;height:340.8px"><div class="nh" style="background:#246283">Modulo</div>
<div class="so" style="top:76px">Value</div>
<div class="nd" style="left:22px;top:124.4px;width:265.2px;height:39.2px;line-height:38.8px">Modulo</div>
<div class="cb" style="left:21.2px;top:185.2px"></div><div class="cl" style="left:59.6px;top:200px">Clamp</div>
<div class="si" style="top:255.2px">Value</div>
<div class="nf " style="left:22px;top:286.4px;width:265.2px;height:38.4px;line-height:38.4px"><i>Value</i><b>1.000</b></div>
</div>
<div class="node" style="left:1291.2px;top:198.8px;width:534.8px;height:469.6px"><div class="nh" style="background:#246283">ColorRamp</div>
<div class="so" style="top:76px">Color</div>
<div class="so" style="top:126px">Alpha</div>
<svg class="abs" style="left:0;top:0" width="536" height="472" viewBox="322.8 461 134 118">
<path d="M331 511.9h4.6M333.3 509.6v4.6M345.6 511.9h4.6" stroke="#ddd" stroke-width="0.8"/><path d="M362.4 510.8l2.2 2.4l2.2-2.4" fill="none" stroke="#ddd" stroke-width="0.8"/>
<rect x="330.9" y="520.3" width="117.3" height="11.9" fill="#222" stroke="#1a1a1a" stroke-width="0.6"/>
<rect x="331.6" y="520.6" width="16.5" height="11.3" fill="#2a2a2a"/>
<rect x="347.9" y="520.6" width="16.6" height="11.3" fill="#808080"/>
<rect x="364.3" y="520.6" width="16.7" height="11.3" fill="#d6d6d6"/>
<rect x="380.8" y="520.6" width="16.8" height="11.3" fill="#c33030"/>
<rect x="397.4" y="520.6" width="16.9" height="11.3" fill="#480909"/>
<rect x="414.1" y="520.6" width="17.1" height="11.3" fill="#3b5ec9"/>
<rect x="431" y="520.6" width="16.5" height="11.3" fill="#162150"/>
<path d="M331.6 525.2L334.3 528V533.4H328.90000000000003V528z" fill="#8a8a8a" stroke="#161616" stroke-width="0.6"/><rect x="329.5" y="529.6" width="4.2" height="3.4" fill="#2a2a2a"/>
<path d="M347.9 525.2L350.59999999999997 528V533.4H345.2V528z" fill="#8a8a8a" stroke="#f0f0f0" stroke-width="0.6"/><rect x="345.79999999999995" y="529.6" width="4.2" height="3.4" fill="#808080"/>
<path d="M364.3 525.2L367.0 528V533.4H361.6V528z" fill="#8a8a8a" stroke="#161616" stroke-width="0.6"/><rect x="362.2" y="529.6" width="4.2" height="3.4" fill="#d6d6d6"/>
<path d="M380.8 525.2L383.5 528V533.4H378.1V528z" fill="#8a8a8a" stroke="#161616" stroke-width="0.6"/><rect x="378.7" y="529.6" width="4.2" height="3.4" fill="#c33030"/>
<path d="M397.4 525.2L400.09999999999997 528V533.4H394.7V528z" fill="#8a8a8a" stroke="#161616" stroke-width="0.6"/><rect x="395.29999999999995" y="529.6" width="4.2" height="3.4" fill="#480909"/>
<path d="M414.1 525.2L416.8 528V533.4H411.40000000000003V528z" fill="#8a8a8a" stroke="#161616" stroke-width="0.6"/><rect x="412.0" y="529.6" width="4.2" height="3.4" fill="#3b5ec9"/>
<path d="M431 525.2L433.7 528V533.4H428.3V528z" fill="#8a8a8a" stroke="#161616" stroke-width="0.6"/><rect x="428.9" y="529.6" width="4.2" height="3.4" fill="#162150"/>
<path d="M447.3 525.2L450.0 528V533.4H444.6V528z" fill="#8a8a8a" stroke="#161616" stroke-width="0.6"/><rect x="445.2" y="529.6" width="4.2" height="3.4" fill="#0e3a12"/>
</svg>
<div class="nd" style="left:232.8px;top:183.6px;width:133.2px;height:40px;line-height:39.6px">RGB</div>
<div class="nd" style="left:371.2px;top:183.6px;width:139.2px;height:40px;line-height:39.6px">Const...</div>
<div class="nf c" style="left:23.2px;top:307.2px;width:138px;height:38.4px;line-height:38.4px">1</div>
<div class="nf " style="left:184px;top:307.2px;width:327.6px;height:38.4px;line-height:38.4px"><i>Pos</i><b>0.143</b></div>
<div class="abs" style="left:23.2px;top:363.6px;width:488.4px;height:40.4px;background:#808080;border-radius:7.2px"></div>
<div class="si" style="top:439px">Fac</div>
</div>
<div class="node" style="left:843px;top:646.8px;width:311.4px;height:378px"><div class="nh" style="background:#83314a">Attribute</div>
<div class="so" style="top:76.4px">Color</div>
<div class="so" style="top:125.2px">Vector</div>
<div class="so" style="top:174px">Fac</div>
<div class="so" style="top:223.2px">Alpha</div>
<div class="cl" style="left:25px;top:290.4px">Type:</div>
<div class="nd" style="left:112.2px;top:270px;width:175.2px;height:40.8px;line-height:40.4px">Geometry</div>
<div class="cl" style="left:25px;top:346px">Name:</div>
<div class="tf" style="left:112.2px;top:326.4px;width:175.2px;height:38.4px">is_random</div>
</div>
<div class="node" style="left:843px;top:1094.8px;width:311.4px;height:378px"><div class="nh" style="background:#83314a">Attribute</div>
<div class="so" style="top:76.4px">Color</div>
<div class="so" style="top:125.2px">Vector</div>
<div class="so" style="top:174px">Fac</div>
<div class="so" style="top:223.2px">Alpha</div>
<div class="cl" style="left:25px;top:290.4px">Type:</div>
<div class="nd" style="left:112.2px;top:270px;width:175.2px;height:40.8px;line-height:40.4px">Geometry</div>
<div class="cl" style="left:25px;top:346px">Name:</div>
<div class="tf" style="left:112.2px;top:326.4px;width:175.2px;height:38.4px">Col</div>
</div>
<div class="node" style="left:1292px;top:1317.8px;width:310px;height:527px"><div class="nh" style="background:#83314a">Texture Coordinate</div>
<div class="so" style="top:77px">Generated</div>
<div class="so" style="top:125.8px">Normal</div>
<div class="so" style="top:175px">UV</div>
<div class="so" style="top:224px">Object</div>
<div class="so" style="top:273.4px">Camera</div>
<div class="so" style="top:322.6px">Window</div>
<div class="so" style="top:371.8px">Reflection</div>
<div class="cl" style="left:23.2px;top:440.2px">Object:</div>
<div class="tf" style="left:116px;top:420.2px;width:169.2px;height:40px"><svg class="abs" style="left:5.6px;top:4.8px" width="32" height="32" viewBox="0 0 8 8"><rect x="2" y="2" width="4" height="4" fill="#eee"/><path d="M0.5 2V0.5H2M6 0.5H7.5V2M7.5 6V7.5H6M2 7.5H0.5V6" fill="none" stroke="#eee" stroke-width="0.7"/></svg><svg class="abs" style="right:6.4px;top:4.8px" width="32" height="32" viewBox="0 0 8 8"><path d="M1 7l.6-1.6l3-3l1 1l-3 3z" fill="none" stroke="#ccc" stroke-width="0.7"/><path d="M4.4 2l1.2-1.2q.9-.4 1.5.3q.5.7 0 1.4L6 3.6z" fill="#ccc"/></svg></div>
<div class="cb" style="left:23.2px;top:480.6px"></div><div class="cl" style="left:61.6px;top:495.4px">From Instancer</div>
</div>
<div class="node" style="left:1695px;top:1317.8px;width:310px;height:782px"><div class="nh" style="background:#3c3c83">Mapping</div>
<div class="so" style="top:77px">Vector</div>
<div class="cl" style="left:23px;top:145px">Type:</div>
<div class="nd" style="left:112.2px;top:123.8px;width:174.8px;height:41.6px;line-height:41.2px">Point</div>
<div class="si" style="top:200px">Vector</div>
<div class="si" style="top:249px">Location:</div>
<div class="nf " style="left:23px;top:275px;width:264px;height:38.8px;line-height:38.8px"><i>X</i><b>0 m</b></div>
<div class="nf " style="left:23px;top:318.6px;width:264px;height:38.4px;line-height:38.4px"><i>Y</i><b>0 m</b></div>
<div class="nf " style="left:23px;top:362.2px;width:264px;height:39.6px;line-height:39.6px"><i>Z</i><b>0 m</b></div>
<div class="si" style="top:433px">Rotation:</div>
<div class="nf " style="left:23px;top:458.2px;width:264px;height:38.8px;line-height:38.8px"><i>X</i><b>0°</b></div>
<div class="nf " style="left:23px;top:501.8px;width:264px;height:38.4px;line-height:38.4px"><i>Y</i><b>90°</b></div>
<div class="nf " style="left:23px;top:545px;width:264px;height:41.6px;line-height:41.6px"><i>Z</i><b>0°</b></div>
<div class="si" style="top:617px">Scale:</div>
<div class="nf " style="left:23px;top:642.2px;width:264px;height:39.6px;line-height:39.6px"><i>X</i><b>1.000</b></div>
<div class="nf " style="left:23px;top:686.6px;width:264px;height:38.4px;line-height:38.4px"><i>Y</i><b>1.000</b></div>
<div class="nf " style="left:23px;top:729.8px;width:264px;height:39.2px;line-height:39.2px"><i>Z</i><b>1.000</b></div>
</div>
<div class="node" style="left:2188px;top:1317.8px;width:310px;height:280px"><div class="nh" style="background:#79461d">Gradient Texture</div>
<div class="so" style="top:77px">Color</div>
<div class="so" style="top:126px">Fac</div>
<div class="nd" style="left:22px;top:173px;width:265.2px;height:40px;line-height:39.6px">Linear</div>
<div class="si" style="top:249px">Vector</div>
</div>
<div class="node" style="left:2188px;top:734.8px;width:310px;height:498px"><div class="nh" style="background:#6e6e1d">Mix</div>
<div class="so" style="top:77.6px">Result</div>
<div class="nd" style="left:22px;top:125.2px;width:264.8px;height:39.6px;line-height:39.2px">Color</div>
<div class="nd" style="left:22px;top:180.4px;width:264.8px;height:39.6px;line-height:39.2px">Mix</div>
<div class="cb" style="left:22px;top:242.4px"></div><div class="cl" style="left:60.4px;top:257.2px">Clamp Result</div>
<div class="cb" style="left:22px;top:298px"></div><div class="cl" style="left:60.4px;top:312.8px">Clamp Factor</div>
<div class="si" style="top:368px">Factor</div>
<div class="si" style="top:417.6px">A</div>
<div class="si" style="top:466.4px">B</div>
</div>
<div class="node" style="left:2725px;top:914.8px;width:310.2px;height:498px"><div class="nh" style="background:#6e6e1d">Soft Light</div>
<div class="so" style="top:77.6px">Result</div>
<div class="nd" style="left:22px;top:125.2px;width:265px;height:39.6px;line-height:39.2px">Color</div>
<div class="nd" style="left:22px;top:180.4px;width:265px;height:39.6px;line-height:39.2px">Soft Light</div>
<div class="cb" style="left:22px;top:242.4px"></div><div class="cl" style="left:60.4px;top:257.2px">Clamp Result</div>
<div class="cb" style="left:22px;top:298px"></div><div class="cl" style="left:60.4px;top:312.8px">Clamp Factor</div>
<div class="nf " style="left:22.8px;top:348.8px;width:265px;height:38.4px;line-height:38.4px"><u style="width:100.0%"></u><i>Factor</i><b>1.000</b></div>
<div class="si" style="top:417.6px">A</div>
<div class="si" style="top:466.4px">B</div>
</div>
<div class="node" style="left:3352px;top:915.6px;width:311.6px;height:498px"><div class="nh" style="background:#6e6e1d">Overlay</div>
<div class="so" style="top:77.6px">Result</div>
<div class="nd" style="left:22px;top:125.2px;width:266.4px;height:39.6px;line-height:39.2px">Color</div>
<div class="nd" style="left:22px;top:180.4px;width:266.4px;height:39.6px;line-height:39.2px">Overlay</div>
<div class="cb" style="left:22px;top:242.4px"></div><div class="cl" style="left:60.4px;top:257.2px">Clamp Result</div>
<div class="cb" style="left:22px;top:298px"></div><div class="cl" style="left:60.4px;top:312.8px">Clamp Factor</div>
<div class="nf " style="left:22.8px;top:348.8px;width:266.4px;height:38.4px;line-height:38.4px"><u style="width:100.0%"></u><i>Factor</i><b>1.000</b></div>
<div class="si" style="top:417.6px">A</div>
<div class="si" style="top:466.4px">B</div>
</div>
<div class="node" style="left:2726px;top:1497.6px;width:309.6px;height:329.2px"><div class="nh" style="background:#38532a">Edge Highlight<svg class="abs" style="right:4.8px;top:5.6px" width="48" height="36" viewBox="0 0 12 9"><rect x="0.6" y="0.8" width="6" height="3" rx="0.6" fill="#ddd"/><rect x="0.6" y="4.8" width="6" height="3" rx="0.6" fill="#ddd"/><path d="M6.6 2.3h1.6v3h-1.6" fill="none" stroke="#ddd" stroke-width="0.7"/><text x="9" y="8.4" font-size="4" fill="#ddd" font-family="DejaVu Sans,sans-serif">4</text></svg></div>
<div class="so" style="top:76.4px">Color</div>
<div class="abs" style="left:22px;top:122.8px;width:266px;height:41.2px;background:#282828;border:2px solid #424242;border-radius:7.2px"></div>
<svg class="abs" style="left:29.6px;top:127.6px" width="32" height="32" viewBox="0 0 9 9"><circle cx="4.5" cy="4.5" r="3.7" fill="none" stroke="#e8e8e8" stroke-width="0.9"/><path d="M4.5 0.8A3.7 3.7 0 0 0 0.8 4.5H4.5zM4.5 4.5H8.2A3.7 3.7 0 0 1 4.5 8.2z" fill="#e8e8e8"/></svg><svg class="abs" style="left:66.4px;top:138.8px" width="16" height="12" viewBox="0 0 4 3"><path d="M0.4 0.5L2 2.2L3.6 0.5" fill="none" stroke="#ddd" stroke-width="0.8"/></svg>
<div class="abs" style="left:92px;top:124.8px;width:94px;height:37.2px;background:#1f1f1f;line-height:36.8px;padding-left:14.4px">Edg...</div>
<div class="abs" style="left:188.8px;top:124.8px;width:51.2px;height:37.2px;background:#545454;line-height:36.8px;text-align:center">4</div>
<div class="abs" style="left:242.4px;top:124.8px;width:44px;height:37.2px;background:#545454;border-radius:0 6.4px 6.4px 0"><svg class="abs" style="left:8px;top:4.8px" width="28" height="28" viewBox="0 0 7 7"><path d="M1 1Q3.5 1.4 3.5 0.6Q3.5 1.4 6 1Q6.4 5 3.5 6.6Q.6 5 1 1z" fill="none" stroke="#bbb" stroke-width="0.7"/></svg></div>
<div class="nf " style="left:22px;top:181.2px;width:266px;height:39.2px;line-height:39.2px"><i>Hihglight</i><b>0.000</b></div>
<div class="nf " style="left:22px;top:229.2px;width:266px;height:38.4px;line-height:38.4px"><i>Hihglight</i><b>0.000</b></div>
<div class="nf " style="left:22px;top:277.6px;width:266px;height:39.2px;line-height:39.2px"><u style="width:100.0%"></u><i>Hihglight</i><b>1.000</b></div>
</div>
<div class="node" style="left:3800px;top:734.8px;width:536px;height:1474.4px"><div class="nh" style="background:#2b652b">Principled BSDF</div>
<div class="so" style="top:78.4px">BSDF</div>
<div class="nd" style="left:22.8px;top:126.8px;width:490.8px;height:39.2px;line-height:38.8px">GGX</div>
<div class="nd" style="left:22.8px;top:182px;width:490.8px;height:39.2px;line-height:38.8px">Random Walk</div>
<div class="si" style="top:257.2px">Base Color</div>
<div class="nf " style="left:23.2px;top:286.6px;width:489.6px;height:39.2px;line-height:39.2px"><i>Subsurface</i><b>0.000</b></div>
<div class="nd" style="left:22.8px;top:335.48px;width:490.8px;height:39.6px;line-height:39.2px">Subsurface Radius</div>
<div class="si" style="top:404.76px">Subsurface C...</div>
<div class="abs" style="left:230px;top:385.16px;width:282.8px;height:39.2px;background:#e7e7e7;border-radius:7.2px"></div>
<div class="nf " style="left:23.2px;top:434.48px;width:489.6px;height:39.2px;line-height:39.2px"><u style="width:13.0%"></u><i>Subsurface IOR</i><b>1.400</b></div>
<div class="nf " style="left:23.2px;top:483.76px;width:489.6px;height:39.2px;line-height:39.2px"><i>Subsurface Anisotropy</i><b>0.000</b></div>
<div class="nf " style="left:23.2px;top:533.04px;width:489.6px;height:39.2px;line-height:39.2px"><i>Metallic</i><b>0.000</b></div>
<div class="nf " style="left:23.2px;top:582.32px;width:489.6px;height:39.2px;line-height:39.2px"><u style="width:9.0%"></u><i>Specular</i><b>0.100</b></div>
<div class="nf " style="left:23.2px;top:631.6px;width:489.6px;height:39.2px;line-height:39.2px"><i>Specular Tint</i><b>0.000</b></div>
<div class="nf " style="left:23.2px;top:680.92px;width:489.6px;height:39.2px;line-height:39.2px"><u style="width:19.0%"></u><i>Roughness</i><b>0.200</b></div>
<div class="nf " style="left:23.2px;top:730.2px;width:489.6px;height:39.2px;line-height:39.2px"><i>Anisotropic</i><b>0.000</b></div>
<div class="nf " style="left:23.2px;top:779.48px;width:489.6px;height:39.2px;line-height:39.2px"><i>Anisotropic Rotation</i><b>0.000</b></div>
<div class="nf " style="left:23.2px;top:828.76px;width:489.6px;height:39.2px;line-height:39.2px"><i>Sheen</i><b>0.000</b></div>
<div class="nf " style="left:23.2px;top:878.04px;width:489.6px;height:39.2px;line-height:39.2px"><u style="width:49.5%"></u><i>Sheen Tint</i><b>0.500</b></div>
<div class="nf " style="left:23.2px;top:927.36px;width:489.6px;height:39.2px;line-height:39.2px"><i>Clearcoat</i><b>0.000</b></div>
<div class="nf " style="left:23.2px;top:976.64px;width:489.6px;height:39.2px;line-height:39.2px"><u style="width:2.5%"></u><i>Clearcoat Roughness</i><b>0.030</b></div>
<div class="nf " style="left:23.2px;top:1025.92px;width:489.6px;height:39.2px;line-height:39.2px"><i>IOR</i><b>1.450</b></div>
<div class="nf " style="left:23.2px;top:1075.2px;width:489.6px;height:39.2px;line-height:39.2px"><i>Transmission</i><b>0.000</b></div>
<div class="nf " style="left:23.2px;top:1124.48px;width:489.6px;height:39.2px;line-height:39.2px"><i>Transmission Roughness</i><b>0.000</b></div>
<div class="si" style="top:1193.4px">Emission</div>
<div class="abs" style="left:231.2px;top:1173.8px;width:281.6px;height:39.2px;background:#000;border-radius:7.2px"></div>
<div class="nf " style="left:23.2px;top:1223.08px;width:489.6px;height:39.2px;line-height:39.2px"><i>Emission Strength</i><b>1.000</b></div>
<div class="nf " style="left:23.2px;top:1272.36px;width:489.6px;height:39.2px;line-height:39.2px"><u style="width:100.0%"></u><i>Alpha</i><b>1.000</b></div>
<div class="si" style="top:1341.2px">Normal</div>
<div class="si" style="top:1390.4px">Clearcoat Normal</div>
<div class="si" style="top:1439.6px">Tangent</div>
</div>
<div class="node" style="left:4428px;top:689.6px;width:310.4px;height:269.2px"><div class="nh" style="background:#411f29">Material Output</div>
<div class="nd" style="left:23.2px;top:58px;width:265.2px;height:40px;line-height:39.6px">All</div>
<div class="si" style="top:133.2px">Surface</div>
<div class="si" style="top:182.8px">Volume</div>
<div class="si" style="top:232.4px">Displacement</div>
</div>
<svg class="abs" style="left:0;top:0" width="5120" height="2216" viewBox="0 411.3 1280 554">
<circle cx="87.00" cy="480.00" r="2.75" fill="#6363c7" stroke="#161616" stroke-width="0.6"/>
<circle cx="87.00" cy="492.40" r="2.75" fill="#c7c729" stroke="#161616" stroke-width="0.6"/>
<circle cx="87.00" cy="504.75" r="2.75" fill="#a1a1a1" stroke="#161616" stroke-width="0.6"/>
<circle cx="87.00" cy="516.90" r="2.75" fill="#a1a1a1" stroke="#161616" stroke-width="0.6"/>
<circle cx="87.00" cy="529.30" r="2.75" fill="#a1a1a1" stroke="#161616" stroke-width="0.6"/>
<circle cx="87.00" cy="541.70" r="2.75" fill="#a1a1a1" stroke="#161616" stroke-width="0.6"/>
<circle cx="187.90" cy="480.00" r="2.75" fill="#a1a1a1" stroke="#161616" stroke-width="0.6"/>
<circle cx="110.00" cy="524.80" r="2.75" fill="#a1a1a1" stroke="#161616" stroke-width="0.6"/>
<circle cx="110.00" cy="537.30" r="2.75" fill="#a1a1a1" stroke="#161616" stroke-width="0.6"/>
<circle cx="288.70" cy="480.00" r="2.75" fill="#a1a1a1" stroke="#161616" stroke-width="0.6"/>
<circle cx="210.90" cy="524.80" r="2.75" fill="#a1a1a1" stroke="#161616" stroke-width="0.6"/>
<circle cx="210.90" cy="537.30" r="2.75" fill="#a1a1a1" stroke="#161616" stroke-width="0.6"/>
<circle cx="456.50" cy="480.00" r="2.75" fill="#c7c729" stroke="#161616" stroke-width="0.6"/>
<circle cx="456.50" cy="492.50" r="2.75" fill="#a1a1a1" stroke="#161616" stroke-width="0.6"/>
<circle cx="322.80" cy="570.75" r="2.75" fill="#a1a1a1" stroke="#161616" stroke-width="0.6"/>
<circle cx="288.60" cy="592.10" r="2.75" fill="#c7c729" stroke="#161616" stroke-width="0.6"/>
<circle cx="288.60" cy="604.30" r="2.75" fill="#6363c7" stroke="#161616" stroke-width="0.6"/>
<circle cx="288.60" cy="616.50" r="2.75" fill="#a1a1a1" stroke="#161616" stroke-width="0.6"/>
<circle cx="288.60" cy="628.80" r="2.75" fill="#a1a1a1" stroke="#161616" stroke-width="0.6"/>
<circle cx="288.60" cy="704.10" r="2.75" fill="#c7c729" stroke="#161616" stroke-width="0.6"/>
<circle cx="288.60" cy="716.30" r="2.75" fill="#6363c7" stroke="#161616" stroke-width="0.6"/>
<circle cx="288.60" cy="728.50" r="2.75" fill="#a1a1a1" stroke="#161616" stroke-width="0.6"/>
<circle cx="288.60" cy="740.80" r="2.75" fill="#a1a1a1" stroke="#161616" stroke-width="0.6"/>
<circle cx="400.50" cy="760.00" r="2.75" fill="#6363c7" stroke="#161616" stroke-width="0.6"/>
<circle cx="400.50" cy="772.20" r="2.75" fill="#6363c7" stroke="#161616" stroke-width="0.6"/>
<circle cx="400.50" cy="784.50" r="2.75" fill="#6363c7" stroke="#161616" stroke-width="0.6"/>
<circle cx="400.50" cy="796.75" r="2.75" fill="#6363c7" stroke="#161616" stroke-width="0.6"/>
<circle cx="400.50" cy="809.10" r="2.75" fill="#6363c7" stroke="#161616" stroke-width="0.6"/>
<circle cx="400.50" cy="821.40" r="2.75" fill="#6363c7" stroke="#161616" stroke-width="0.6"/>
<circle cx="400.50" cy="833.70" r="2.75" fill="#6363c7" stroke="#161616" stroke-width="0.6"/>
<circle cx="501.25" cy="760.00" r="2.75" fill="#6363c7" stroke="#161616" stroke-width="0.6"/>
<circle cx="423.75" cy="790.75" r="2.75" fill="#6363c7" stroke="#161616" stroke-width="0.6"/>
<circle cx="423.75" cy="803.00" r="2.75" fill="#6363c7" stroke="#161616" stroke-width="0.6"/>
<circle cx="423.75" cy="849.00" r="2.75" fill="#6363c7" stroke="#161616" stroke-width="0.6"/>
<circle cx="423.75" cy="895.00" r="2.75" fill="#6363c7" stroke="#161616" stroke-width="0.6"/>
<circle cx="624.50" cy="760.00" r="2.75" fill="#c7c729" stroke="#161616" stroke-width="0.6"/>
<circle cx="624.50" cy="772.25" r="2.75" fill="#a1a1a1" stroke="#161616" stroke-width="0.6"/>
<circle cx="547.00" cy="803.00" r="2.75" fill="#6363c7" stroke="#161616" stroke-width="0.6"/>
<circle cx="624.50" cy="614.40" r="2.75" fill="#c7c729" stroke="#161616" stroke-width="0.6"/>
<circle cx="547.00" cy="687.00" r="2.75" fill="#a1a1a1" stroke="#161616" stroke-width="0.6"/>
<circle cx="547.00" cy="699.40" r="2.75" fill="#c7c729" stroke="#161616" stroke-width="0.6"/>
<circle cx="547.00" cy="711.60" r="2.75" fill="#c7c729" stroke="#161616" stroke-width="0.6"/>
<circle cx="758.80" cy="659.40" r="2.75" fill="#c7c729" stroke="#161616" stroke-width="0.6"/>
<circle cx="681.25" cy="732.00" r="2.75" fill="#a1a1a1" stroke="#161616" stroke-width="0.6"/>
<circle cx="681.25" cy="744.40" r="2.75" fill="#c7c729" stroke="#161616" stroke-width="0.6"/>
<circle cx="681.25" cy="756.60" r="2.75" fill="#c7c729" stroke="#161616" stroke-width="0.6"/>
<circle cx="915.90" cy="659.60" r="2.75" fill="#c7c729" stroke="#161616" stroke-width="0.6"/>
<circle cx="838.00" cy="732.20" r="2.75" fill="#a1a1a1" stroke="#161616" stroke-width="0.6"/>
<circle cx="838.00" cy="744.60" r="2.75" fill="#c7c729" stroke="#161616" stroke-width="0.6"/>
<circle cx="838.00" cy="756.80" r="2.75" fill="#c7c729" stroke="#161616" stroke-width="0.6"/>
<circle cx="758.90" cy="804.80" r="2.75" fill="#c7c729" stroke="#161616" stroke-width="0.6"/>
<circle cx="681.50" cy="835.90" r="2.75" fill="#a1a1a1" stroke="#161616" stroke-width="0.6"/>
<circle cx="681.50" cy="847.90" r="2.75" fill="#a1a1a1" stroke="#161616" stroke-width="0.6"/>
<circle cx="681.50" cy="860.00" r="2.75" fill="#a1a1a1" stroke="#161616" stroke-width="0.6"/>
<circle cx="1084.00" cy="614.60" r="2.75" fill="#63c763" stroke="#161616" stroke-width="0.6"/>
<circle cx="950.00" cy="659.30" r="2.75" fill="#c7c729" stroke="#161616" stroke-width="0.6"/>
<circle cx="950.00" cy="671.55" r="2.75" fill="#a1a1a1" stroke="#161616" stroke-width="0.6"/>
<circle cx="950.00" cy="683.87" r="2.75" fill="#6363c7" stroke="#161616" stroke-width="0.6"/>
<circle cx="950.00" cy="696.19" r="2.75" fill="#c7c729" stroke="#161616" stroke-width="0.6"/>
<circle cx="950.00" cy="708.52" r="2.75" fill="#a1a1a1" stroke="#161616" stroke-width="0.6"/>
<circle cx="950.00" cy="720.84" r="2.75" fill="#a1a1a1" stroke="#161616" stroke-width="0.6"/>
<circle cx="950.00" cy="733.16" r="2.75" fill="#a1a1a1" stroke="#161616" stroke-width="0.6"/>
<circle cx="950.00" cy="745.48" r="2.75" fill="#a1a1a1" stroke="#161616" stroke-width="0.6"/>
<circle cx="950.00" cy="757.80" r="2.75" fill="#a1a1a1" stroke="#161616" stroke-width="0.6"/>
<circle cx="950.00" cy="770.13" r="2.75" fill="#a1a1a1" stroke="#161616" stroke-width="0.6"/>
<circle cx="950.00" cy="782.45" r="2.75" fill="#a1a1a1" stroke="#161616" stroke-width="0.6"/>
<circle cx="950.00" cy="794.77" r="2.75" fill="#a1a1a1" stroke="#161616" stroke-width="0.6"/>
<circle cx="950.00" cy="807.09" r="2.75" fill="#a1a1a1" stroke="#161616" stroke-width="0.6"/>
<circle cx="950.00" cy="819.41" r="2.75" fill="#a1a1a1" stroke="#161616" stroke-width="0.6"/>
<circle cx="950.00" cy="831.74" r="2.75" fill="#a1a1a1" stroke="#161616" stroke-width="0.6"/>
<circle cx="950.00" cy="844.06" r="2.75" fill="#a1a1a1" stroke="#161616" stroke-width="0.6"/>
<circle cx="950.00" cy="856.38" r="2.75" fill="#a1a1a1" stroke="#161616" stroke-width="0.6"/>
<circle cx="950.00" cy="868.70" r="2.75" fill="#a1a1a1" stroke="#161616" stroke-width="0.6"/>
<circle cx="950.00" cy="881.02" r="2.75" fill="#a1a1a1" stroke="#161616" stroke-width="0.6"/>
<circle cx="950.00" cy="893.35" r="2.75" fill="#c7c729" stroke="#161616" stroke-width="0.6"/>
<circle cx="950.00" cy="905.67" r="2.75" fill="#a1a1a1" stroke="#161616" stroke-width="0.6"/>
<circle cx="950.00" cy="917.99" r="2.75" fill="#a1a1a1" stroke="#161616" stroke-width="0.6"/>
<circle cx="950.00" cy="930.30" r="2.75" fill="#6363c7" stroke="#161616" stroke-width="0.6"/>
<circle cx="950.00" cy="942.60" r="2.75" fill="#6363c7" stroke="#161616" stroke-width="0.6"/>
<circle cx="950.00" cy="954.90" r="2.75" fill="#6363c7" stroke="#161616" stroke-width="0.6"/>
<circle cx="1107.00" cy="617.00" r="2.75" fill="#63c763" stroke="#161616" stroke-width="0.6"/>
<circle cx="1107.00" cy="629.40" r="2.75" fill="#63c763" stroke="#161616" stroke-width="0.6"/>
<circle cx="1107.00" cy="641.80" r="2.75" fill="#6363c7" stroke="#161616" stroke-width="0.6"/>
</svg>
</div>
</div></div></body></html>
